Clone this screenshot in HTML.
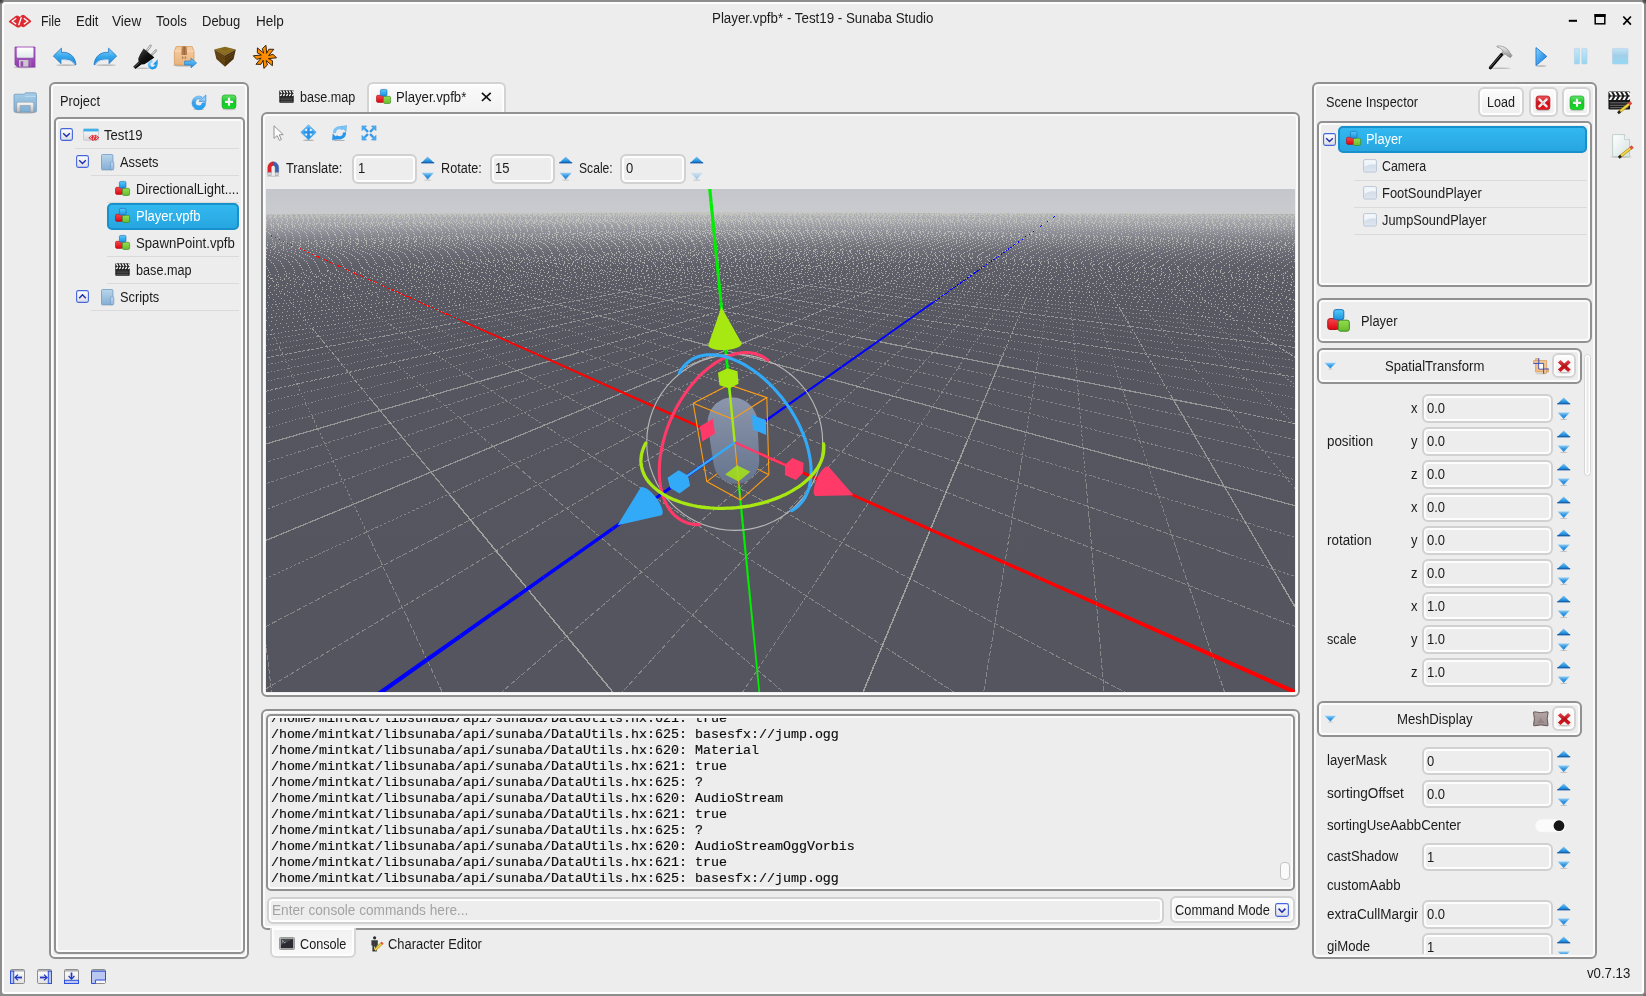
<!DOCTYPE html><html><head><meta charset="utf-8"><title>Sunaba Studio</title>
<style>
*{box-sizing:border-box}
html,body{margin:0;padding:0}
body{width:1646px;height:996px;overflow:hidden;position:relative;background:#8d8d8d;font-family:"Liberation Sans",sans-serif;font-size:13px;color:#1b1b1b;line-height:1}
#root{position:absolute;left:0;top:0;width:1646px;height:996px;will-change:transform;overflow:hidden}
.a{position:absolute}
.win{left:2px;top:2px;width:1642px;height:992px;background:#ededed;border-radius:4px 4px 3px 3px;box-shadow:inset 0 0 0 2px #fefefe}
.t{position:absolute;white-space:pre;line-height:16px;height:16px;font-size:14px;transform:scaleX(.929);transform-origin:0 0}
.frame{position:absolute;border:2px solid #919191;border-radius:6px;box-shadow:inset 0 0 0 2px #fbfbfb;background:#ededed}
.sep{position:absolute;height:1px;background:#dadada}
.sel{position:absolute;border-radius:5px;border:2px solid #1890cc;background:linear-gradient(#33b8f0,#27a6e0)}
.inp{position:absolute;border:2px solid #d1d1d1;border-radius:6px;box-shadow:inset 0 0 0 2px #fdfdfd;background:#ededed}
.btn{position:absolute;border:2px solid #d3d3d3;border-radius:6px;background:linear-gradient(#fcfcfc,#eeeeee);box-shadow:inset 0 0 0 2px #fdfdfd}
.mono{font-family:"Liberation Mono",monospace;font-size:13.33px;color:#0c0c0c;transform:none;-webkit-text-stroke:.16px #0c0c0c}
svg{position:absolute;overflow:visible}
</style>

</head><body><div id="root">
<div class="a" style="left:0;top:0;width:5px;height:5px;background:radial-gradient(circle at 0 0,#3c3c3c 0,#4a4a4a 2px,#8d8d8d 4.5px)"></div>
<div class="a" style="left:1641px;top:0;width:5px;height:5px;background:radial-gradient(circle at 100% 0,#3c3c3c 0,#4a4a4a 2px,#8d8d8d 4.5px)"></div>
<div class="a" style="left:1642px;top:992px;width:4px;height:4px;background:radial-gradient(circle at 100% 100%,#666 0,#777 2px,#8d8d8d 4px)"></div>
<div class="a win"></div>
<svg style="left:8px;top:14px" width="24" height="14" viewBox="0 0 24 14"><path d="M1.2 7 L7.6 1.9 Q9 1 10.4 1.9 L12 3 L13.6 1.3 Q15 .3 16.4 1.3 L22.8 6.4 Q23.6 7.2 22.8 8 L17 12.6 Q15.4 13.6 14 12.8 L13 12.2 L11.6 13.2 Q10 14 8.6 13 L1.2 8.2 Q.4 7.6 1.2 7Z" fill="#dc2a30"/><path d="M8.2 4.2 L4.2 7.2 L8.2 10.2" fill="none" stroke="#fff" stroke-width="1.3"/><path d="M15.8 4.2 L19.8 7.2 L15.8 10.2" fill="none" stroke="#fff" stroke-width="1.3"/><path d="M13.4 3.2 L10.6 11.2" stroke="#fff" stroke-width="1.3"/></svg>
<div class="t " style="left:40.5px;top:12.8px;transform:scaleX(0.8864);">File</div>
<div class="t " style="left:75.6px;top:12.8px;transform:scaleX(0.9285);">Edit</div>
<div class="t " style="left:112px;top:12.8px;transform:scaleX(0.9703);">View</div>
<div class="t " style="left:156.4px;top:12.8px;transform:scaleX(0.9423);">Tools</div>
<div class="t " style="left:202.3px;top:12.8px;transform:scaleX(0.9281);">Debug</div>
<div class="t " style="left:256.4px;top:12.8px;transform:scaleX(0.9689);">Help</div>
<div class="t " style="left:712.3px;top:10.2px;transform:scaleX(0.9529);">Player.vpfb* - Test19 - Sunaba Studio</div>
<svg style="left:0px;top:0px" width="1646" height="40" viewBox="0 0 1646 40"><rect x="1568.8" y="19.8" width="8.2" height="2" fill="#000"/><rect x="1595.2" y="14.8" width="9.6" height="9" fill="none" stroke="#000" stroke-width="1.5"/><rect x="1594.5" y="14" width="11" height="3" fill="#000"/><path d="M1623.3 16.5 L1630.9 24.6 M1630.9 16.5 L1623.3 24.6" stroke="#000" stroke-width="1.7" fill="none"/></svg>
<svg style="left:13px;top:45px" width="24" height="24" viewBox="0 0 24 24"><defs><linearGradient id="g1" x1="0" y1="0" x2="0" y2="1"><stop offset="0" stop-color="#b86ccc"/><stop offset="1" stop-color="#8a3fa6"/></linearGradient><linearGradient id="g2" x1="0" y1="0" x2="0" y2="1"><stop offset="0" stop-color="#ffffff"/><stop offset="1" stop-color="#dfeaea"/></linearGradient></defs><ellipse cx="12" cy="22.3" rx="11.5" ry="1" fill="#000" opacity=".18"/><path d="M2 2 H22 V22 H4.5 L2 19.5Z" fill="url(#g1)" stroke="#8d3aa8" stroke-width=".8"/><rect x="3.8" y="2.6" width="16.6" height="10.2" rx=".8" fill="url(#g2)"/><rect x="6" y="15" width="9.4" height="6.6" fill="#c9c9cc"/><rect x="7.6" y="16.4" width="2.6" height="5.2" fill="#9a48b4"/><rect x="16.8" y="14.6" width="1.4" height="6.6" fill="#a860be"/></svg>
<svg style="left:53px;top:47px" width="24" height="20" viewBox="0 0 24 20"><defs><linearGradient id="g3" x1="0" y1="0" x2="0" y2="1"><stop offset="0" stop-color="#8fd6fb"/><stop offset="0.5" stop-color="#38a8ec"/><stop offset="1" stop-color="#1d86d6"/></linearGradient></defs><ellipse cx="13" cy="18.2" rx="10" ry=".9" fill="#000" opacity=".2"/><g transform=""><path d="M.4 9 L8.4 1.2 V5.4 C16 4.6 22 9 23 17.6 H21.8 C19.6 13.6 15.4 12.4 8.4 12.6 V17 Z" fill="url(#g3)" stroke="#2a7cc8" stroke-width=".9" stroke-linejoin="round"/><path d="M8.4 12.6 V17 H9 V13.4 C15 13.2 19.4 14 21.6 17.4 H22 C19.6 13.6 15.4 12.4 8.4 12.6Z" fill="#fff" opacity=".85"/></g></svg>
<svg style="left:93px;top:47px" width="24" height="20" viewBox="0 0 24 20"><defs><linearGradient id="g4" x1="0" y1="0" x2="0" y2="1"><stop offset="0" stop-color="#8fd6fb"/><stop offset="0.5" stop-color="#38a8ec"/><stop offset="1" stop-color="#1d86d6"/></linearGradient></defs><ellipse cx="13" cy="18.2" rx="10" ry=".9" fill="#000" opacity=".2"/><g transform="translate(24,0) scale(-1,1)"><path d="M.4 9 L8.4 1.2 V5.4 C16 4.6 22 9 23 17.6 H21.8 C19.6 13.6 15.4 12.4 8.4 12.6 V17 Z" fill="url(#g4)" stroke="#2a7cc8" stroke-width=".9" stroke-linejoin="round"/><path d="M8.4 12.6 V17 H9 V13.4 C15 13.2 19.4 14 21.6 17.4 H22 C19.6 13.6 15.4 12.4 8.4 12.6Z" fill="#fff" opacity=".85"/></g></svg>
<svg style="left:133px;top:45px" width="25" height="25" viewBox="0 0 25 25"><defs><linearGradient id="g5" x1="0" y1="0" x2="1" y2="1"><stop offset="0" stop-color="#5a5a5a"/><stop offset="0.5" stop-color="#111"/><stop offset="1" stop-color="#000"/></linearGradient></defs><ellipse cx="10" cy="23.3" rx="7" ry=".8" fill="#000" opacity=".2"/><path d="M14 5.4 L17.6 .8 M19 9.6 L23 5.4" stroke="#9a9a9a" stroke-width="2.4" stroke-linecap="round"/><path d="M14.4 4.8 L17.4 1 M19.4 9 L22.8 5.6" stroke="#eee" stroke-width="1" stroke-linecap="round"/><path d="M10.6 3.4 L21.4 12.6 L15.8 16.4 L11.4 19.2 L8.4 19.4 L2.4 24 L.2 21.8 L5.6 16.6 L5.2 13.8 L7 9.6Z" fill="url(#g5)"/><path d="M1 22.6 L6.6 17.4" stroke="#777" stroke-width=".7"/><defs><linearGradient id="g6" x1="0" y1="0" x2="0" y2="1"><stop offset="0" stop-color="#8ed4fb"/><stop offset="1" stop-color="#1b98ee"/></linearGradient></defs><circle cx="19.6" cy="19.6" r="3.5" fill="none" stroke="url(#g6)" stroke-width="2.62" stroke-dasharray="17.15 4.90" transform="rotate(-20 19.6 19.6)"/><path d="M24.68 14.35 V19.40 H19.80Z" fill="#2a96ea"/></svg>
<svg style="left:173px;top:45px" width="24" height="24" viewBox="0 0 24 24"><defs><linearGradient id="g7" x1="0" y1="0" x2="0" y2="1"><stop offset="0" stop-color="#f6cfa4"/><stop offset="1" stop-color="#e9b27c"/></linearGradient><linearGradient id="g8" x1="0" y1="0" x2="0" y2="1"><stop offset="0" stop-color="#7ccbfa"/><stop offset="1" stop-color="#1d8fe6"/></linearGradient></defs><ellipse cx="11" cy="20.6" rx="11" ry=".9" fill="#000" opacity=".25"/><path d="M1.4 6 L3.2 1.6 H19.2 L21 6 V20 H1.4Z" fill="url(#g7)" stroke="#d79c62" stroke-width=".8"/><path d="M1.4 6 H21" stroke="#fbe3c8" stroke-width=".8"/><path d="M8.8 1.6 H13.6 L14 6 V10 H8.4 V6Z" fill="#b87f4e"/><path d="M10.6 1.6 H12 V10 H10.6Z" fill="#9d6a3e"/><path d="M9 12 l1.2 0 l-.8 2 M11.6 12 l1.2 0 l-.8 2" stroke="#8a5a30" stroke-width=".7" fill="none"/><path d="M11.6 16 H18 V13.2 L23.6 18 L18 22.8 V20 H11.6Z" fill="url(#g8)" stroke="#2a80d0" stroke-width=".7" stroke-linejoin="round"/></svg>
<svg style="left:213px;top:46px" width="24" height="22" viewBox="0 0 24 22"><path d="M1.2 3.6 L12 .8 L22.8 3.6 L12 9.4Z" fill="#86691c"/><path d="M1.2 3.6 L12 9.4 V20.8 L3.4 13Z" fill="#5e4013"/><path d="M22.8 3.6 L12 9.4 V20.8 L20.6 13Z" fill="#4a300d"/><path d="M3 6.6 L12 12 L21 6.6 M3.4 9.6 L12 15 L20.4 9.6" stroke="#6e5018" stroke-width=".9" fill="none" opacity=".8"/><path d="M5 2.9 L12 6.4 L19 2.9" stroke="#9a7c28" stroke-width=".8" fill="none"/></svg>
<svg style="left:253px;top:45px" width="25" height="25" viewBox="0 0 25 25"><path d="M10.69 8.09 L9.34 3.69 L12.92 0.19 L13.67 8.33 L15.82 4.26 L20.82 4.31 L15.61 10.59 L20.01 9.24 L23.51 12.82 L15.37 13.57 L19.44 15.72 L19.39 20.72 L13.11 15.51 L14.46 19.91 L10.88 23.41 L10.13 15.27 L7.98 19.34 L2.98 19.29 L8.19 13.01 L3.79 14.36 L0.29 10.78 L8.43 10.03 L4.36 7.88 L4.41 2.88Z" fill="#ff8c00" stroke="#3a2206" stroke-width="1" stroke-linejoin="round"/></svg>
<svg style="left:1488px;top:45px" width="25" height="25" viewBox="0 0 25 25"><defs><linearGradient id="g9" x1="0" y1="0" x2="0" y2="1"><stop offset="0" stop-color="#f4f4f4"/><stop offset="1" stop-color="#8a8a8a"/></linearGradient></defs><ellipse cx="12" cy="23.3" rx="11" ry=".7" fill="#000" opacity=".2"/><path d="M9 1 C14 .6 19.6 2.6 21.6 7.4 L24 10.6 L22.4 12.6 L19.4 10.8 L17 8.8 L14.4 11 L12.6 9.2 L15 6.6 C14 4 12 2.6 9 2Z" fill="url(#g9)" stroke="#777" stroke-width=".6"/><path d="M13.4 9.8 L2.4 22.8" stroke="#0a0a0a" stroke-width="3.2" stroke-linecap="round"/><path d="M12.6 10.2 L2.4 22" stroke="#777" stroke-width=".7" stroke-linecap="round"/></svg>
<svg style="left:1534.7px;top:47px" width="13" height="20" viewBox="0 0 13 20"><defs><linearGradient id="g10" x1="0" y1="0" x2="1" y2="1"><stop offset="0" stop-color="#8ad8fc"/><stop offset="0.55" stop-color="#3a9cec"/><stop offset="1" stop-color="#1a78d8"/></linearGradient></defs><ellipse cx="6" cy="19" rx="5.5" ry=".8" fill="#000" opacity=".25"/><path d="M1 .6 L11.8 9.4 L1 18.6Z" fill="url(#g10)" stroke="#2c82d8" stroke-width="1" stroke-linejoin="round"/></svg>
<svg style="left:1573.7px;top:48px" width="14" height="17" viewBox="0 0 14 17"><defs><linearGradient id="g11" x1="0" y1="0" x2="0" y2="1"><stop offset="0" stop-color="#c5e6f6"/><stop offset="1" stop-color="#93d6f2"/></linearGradient></defs><rect x=".4" y=".4" width="5.2" height="15.6" rx=".8" fill="url(#g11)" stroke="#b4cdea" stroke-width=".6"/><rect x="7.8" y=".4" width="5.2" height="15.6" rx=".8" fill="url(#g11)" stroke="#b4cdea" stroke-width=".6"/></svg>
<svg style="left:1612px;top:48px" width="17" height="17" viewBox="0 0 17 17"><defs><linearGradient id="g12" x1="0" y1="0" x2="0" y2="1"><stop offset="0" stop-color="#c0e4f6"/><stop offset="0.45" stop-color="#a4cfe8"/><stop offset="1" stop-color="#93d8f4"/></linearGradient></defs><rect x=".4" y=".4" width="15.6" height="15.6" rx="1" fill="url(#g12)" stroke="#b4cdea" stroke-width=".6"/></svg>
<svg style="left:12.8px;top:91.6px" width="25" height="22" viewBox="0 0 25 22"><defs><linearGradient id="g13" x1="0" y1="0" x2="0" y2="1"><stop offset="0" stop-color="#a6cde6"/><stop offset="1" stop-color="#7eaed6"/></linearGradient><linearGradient id="g14" x1="0" y1="0" x2="0" y2="1"><stop offset="0" stop-color="#fafafa"/><stop offset="1" stop-color="#b9b9bf"/></linearGradient></defs><ellipse cx="12" cy="20.6" rx="11" ry=".8" fill="#000" opacity=".25"/><path d="M1 3.2 Q1 2.2 2 2.2 H11 L12.6 .8 H22 Q23.4 .8 23.4 2.2 V19 Q23.4 20 22.4 20 H2 Q1 20 1 19Z" fill="url(#g13)" stroke="#6f9cc0" stroke-width=".8"/><path d="M12 4.4 H22.6" stroke="#c5e0f0" stroke-width=".8"/><path d="M3.6 20.2 V12 Q3.6 10.2 5.4 10.2 H19 Q20.8 10.2 20.8 12 V20.2 H17.2 V13.6 H7.2 V20.2Z" fill="url(#g14)" stroke="#8a8a90" stroke-width=".5"/></svg>
<svg style="left:1608px;top:91px" width="26" height="24" viewBox="0 0 26 24"><g transform="scale(1.5,1.46)"><rect x=".3" y=".3" width="14.4" height="12.4" rx=".8" fill="#1a1a1a"/><path d="M0.60 0.6 h1.5 l1.4 2.60 h-1.5Z" fill="#fff"/><path d="M3.60 0.6 h1.5 l1.4 2.60 h-1.5Z" fill="#fff"/><path d="M6.60 0.6 h1.5 l1.4 2.60 h-1.5Z" fill="#fff"/><path d="M9.60 0.6 h1.5 l1.4 2.60 h-1.5Z" fill="#fff"/><path d="M12.60 0.6 h1.5 l1.4 2.60 h-1.5Z" fill="#fff"/><path d="M2.00 3.6 h1.5 l-1.4 2.60 h-1.5Z" fill="#fff"/><path d="M5.00 3.6 h1.5 l-1.4 2.60 h-1.5Z" fill="#fff"/><path d="M8.00 3.6 h1.5 l-1.4 2.60 h-1.5Z" fill="#fff"/><path d="M11.00 3.6 h1.5 l-1.4 2.60 h-1.5Z" fill="#fff"/><path d="M14.00 3.6 h1.5 l-1.4 2.60 h-1.5Z" fill="#fff"/><path d="M1.4 8.1 H13.6 M1.4 9.8 H13.6 M1.4 11.4 H13.6" stroke="#7a7a7a" stroke-width=".6"/><path d="M.4 3.4 H14.6 M.4 6.6 H14.6" stroke="#1a1a1a" stroke-width=".5"/></g><path d="M23.2 11.4 L10.8 21.4" stroke="#b39212" stroke-width="3.1"/><path d="M23.2 11.4 L10.8 21.4" stroke="#f2d84a" stroke-width="1.8"/><path d="M23.2 11.4 L21.0 13.3" stroke="#e84850" stroke-width="3.1"/><path d="M12.200000000000001 20.2 L10.0 22.2" stroke="#222" stroke-width="2.6"/></svg>
<svg style="left:1610px;top:134px" width="25" height="25" viewBox="0 0 25 25"><defs><linearGradient id="g15" x1="0" y1="0" x2="1" y2="1"><stop offset="0" stop-color="#ffffff"/><stop offset="1" stop-color="#d4e2e0"/></linearGradient></defs><ellipse cx="11" cy="23" rx="11" ry=".7" fill="#000" opacity=".2"/><path d="M2.6 .6 H14.6 L19.6 5.6 V22.6 H2.6Z" fill="url(#g15)" stroke="#b4c4c2" stroke-width=".8"/><path d="M14.6 .6 V5.6 H19.6" fill="#eef4f4" stroke="#b4c4c2" stroke-width=".7"/><path d="M22.6 12.6 L9.6 23" stroke="#b39212" stroke-width="3.1"/><path d="M22.6 12.6 L9.6 23" stroke="#f2d84a" stroke-width="1.8"/><path d="M22.6 12.6 L20.400000000000002 14.5" stroke="#e84850" stroke-width="3.1"/><path d="M11.0 21.8 L8.799999999999999 23.8" stroke="#222" stroke-width="2.6"/></svg>
<div class="a frame" style="left:49px;top:82px;width:200px;height:877px;"></div>
<div class="t " style="left:59.8px;top:93.2px;transform:scaleX(0.9179);">Project</div>
<svg style="left:191px;top:94px" width="16" height="16" viewBox="0 0 16 16"><defs><linearGradient id="g16" x1="0" y1="0" x2="0" y2="1"><stop offset="0" stop-color="#8fd4fb"/><stop offset="0.45" stop-color="#3f9fe6"/><stop offset="1" stop-color="#18a6fa"/></linearGradient></defs><ellipse cx="7.6" cy="15.2" rx="5.6" ry=".7" fill="#000" opacity=".2"/><path d="M11.2 2.9 A6.9 6.9 0 1 0 14.7 8.4 L11.1 9 A3.3 3.3 0 1 1 9 5.3Z" fill="url(#g16)" stroke="#3a90dc" stroke-width=".5"/><path d="M14.9 .9 V7.5 H7.9Z" fill="#64b8f4" stroke="#2f88da" stroke-width=".6" stroke-linejoin="round"/><path d="M14.2 2.6 V6.8 H9.8Z" fill="#9bd4fa" opacity=".8"/></svg>
<svg style="left:221px;top:94px" width="16" height="16" viewBox="0 0 16 16"><defs><linearGradient id="g17" x1="0" y1="0" x2="0" y2="1"><stop offset="0" stop-color="#62e46a"/><stop offset="0.5" stop-color="#14c424"/><stop offset="1" stop-color="#12dc24"/></linearGradient></defs><ellipse cx="8" cy="15.4" rx="7" ry=".8" fill="#000" opacity=".15"/><rect x="1.1" y="1" width="13.8" height="13.6" rx="2.6" fill="url(#g17)" stroke="#1aa424" stroke-width=".7"/><path d="M8 3.8 V11.8 M3.9 7.8 H12.1" stroke="#fbeefb" stroke-width="2.2"/></svg>
<div class="a frame" style="left:54px;top:117px;width:191px;height:837px;border-radius:5px"></div>
<svg style="left:60px;top:128px" width="13" height="13" viewBox="0 0 13 13"><defs><linearGradient id="g18" x1="0" y1="0" x2="0" y2="1"><stop offset="0" stop-color="#ffffff"/><stop offset="1" stop-color="#dcdce4"/></linearGradient></defs><rect x=".6" y=".6" width="11.8" height="11.8" rx="1.8" fill="url(#g18)" stroke="#4466dc" stroke-width="1.1"/><path d="M3.2 5.2 L6.5 8.6 L9.8 5.2" fill="none" stroke="#1c2eaa" stroke-width="1.4"/></svg>
<svg style="left:83px;top:128px" width="17" height="14" viewBox="0 0 17 14"><defs><linearGradient id="g19" x1="0" y1="0" x2="0" y2="1"><stop offset="0" stop-color="#ffffff"/><stop offset="1" stop-color="#d8d8dc"/></linearGradient></defs><rect x=".5" y=".9" width="15" height="11.4" rx=".8" fill="url(#g19)" stroke="#b4bcc8" stroke-width=".6"/><rect x=".5" y=".8" width="15" height="2.7" fill="#3db2ea"/><g transform="translate(5.2,6.3) scale(.47)"><path d="M1.2 7 L7.6 1.9 Q9 1 10.4 1.9 L12 3 L13.6 1.3 Q15 .3 16.4 1.3 L22.8 6.4 Q23.6 7.2 22.8 8 L17 12.6 Q15.4 13.6 14 12.8 L13 12.2 L11.6 13.2 Q10 14 8.6 13 L1.2 8.2 Q.4 7.6 1.2 7Z" fill="#dc2a30"/><path d="M8.2 4 L4.2 7.2 L8.2 10.4 M15.8 4 L19.8 7.2 L15.8 10.4 M13.4 3 L10.6 11.4" fill="none" stroke="#fff" stroke-width="1.6"/></g></svg>
<div class="t " style="left:103.7px;top:126.8px;transform:scaleX(0.9358);">Test19</div>
<div class="a sep" style="left:75px;top:148px;width:164px;height:1px;"></div>
<svg style="left:76px;top:155px" width="13" height="13" viewBox="0 0 13 13"><defs><linearGradient id="g20" x1="0" y1="0" x2="0" y2="1"><stop offset="0" stop-color="#ffffff"/><stop offset="1" stop-color="#dcdce4"/></linearGradient></defs><rect x=".6" y=".6" width="11.8" height="11.8" rx="1.8" fill="url(#g20)" stroke="#4466dc" stroke-width="1.1"/><path d="M3.2 5.2 L6.5 8.6 L9.8 5.2" fill="none" stroke="#1c2eaa" stroke-width="1.4"/></svg>
<svg style="left:101px;top:154px" width="14" height="17" viewBox="0 0 14 17"><defs><linearGradient id="g21" x1="0" y1="0" x2="0" y2="1"><stop offset="0" stop-color="#b9d6ea"/><stop offset="1" stop-color="#86aed6"/></linearGradient><linearGradient id="g22" x1="0" y1="0" x2="0" y2="1"><stop offset="0" stop-color="#c0d8ee"/><stop offset="1" stop-color="#94b8de"/></linearGradient></defs><ellipse cx="6.5" cy="16" rx="7" ry=".6" fill="#000" opacity=".15"/><rect x=".5" y=".5" width="11.4" height="15.2" rx="1" fill="url(#g21)" stroke="#6f9cc4" stroke-width=".8"/><path d="M9.4 9 Q9.4 7.8 10.6 7.8 H11.8 Q12.8 7.8 12.8 9 V14.4 Q12.8 15.6 11.6 15.6 H9.4Z" fill="url(#g22)" stroke="#6f9cc4" stroke-width=".7"/></svg>
<div class="t " style="left:119.8px;top:153.8px;transform:scaleX(0.9163);">Assets</div>
<div class="a sep" style="left:91px;top:175px;width:148px;height:1px;"></div>
<svg style="left:115px;top:181px" width="15" height="15" viewBox="0 0 15 15"><defs><linearGradient id="g23" x1="0" y1="0" x2="0" y2="1"><stop offset="0" stop-color="#f4484c"/><stop offset="1" stop-color="#de0410"/></linearGradient></defs><rect x="0.5" y="6.3" width="7.1" height="7.1" rx="1.42" fill="url(#g23)" stroke="#a81218" stroke-width="0.64"/><defs><linearGradient id="g24" x1="0" y1="0" x2="0" y2="1"><stop offset="0" stop-color="#94de4c"/><stop offset="1" stop-color="#68bc2e"/></linearGradient></defs><rect x="7.4" y="7.3" width="7.2" height="7.2" rx="1.44" fill="url(#g24)" stroke="#3c8a22" stroke-width="0.65"/><defs><linearGradient id="g25" x1="0" y1="0" x2="0" y2="1"><stop offset="0" stop-color="#54cafe"/><stop offset="1" stop-color="#1e92da"/></linearGradient></defs><rect x="4.4" y="0.4" width="6.6" height="6.6" rx="1.32" fill="url(#g25)" stroke="#1868b4" stroke-width="0.59"/></svg>
<div class="t " style="left:135.6px;top:180.8px;transform:scaleX(0.9191);">DirectionalLight....</div>
<div class="a sep" style="left:107px;top:202px;width:132px;height:1px;"></div>
<div class="a sel" style="left:107px;top:203px;width:132px;height:27px;"></div>
<svg style="left:115px;top:208px" width="15" height="15" viewBox="0 0 15 15"><defs><linearGradient id="g26" x1="0" y1="0" x2="0" y2="1"><stop offset="0" stop-color="#f4484c"/><stop offset="1" stop-color="#de0410"/></linearGradient></defs><rect x="0.5" y="6.3" width="7.1" height="7.1" rx="1.42" fill="url(#g26)" stroke="#a81218" stroke-width="0.64"/><defs><linearGradient id="g27" x1="0" y1="0" x2="0" y2="1"><stop offset="0" stop-color="#94de4c"/><stop offset="1" stop-color="#68bc2e"/></linearGradient></defs><rect x="7.4" y="7.3" width="7.2" height="7.2" rx="1.44" fill="url(#g27)" stroke="#3c8a22" stroke-width="0.65"/><defs><linearGradient id="g28" x1="0" y1="0" x2="0" y2="1"><stop offset="0" stop-color="#54cafe"/><stop offset="1" stop-color="#1e92da"/></linearGradient></defs><rect x="4.4" y="0.4" width="6.6" height="6.6" rx="1.32" fill="url(#g28)" stroke="#1868b4" stroke-width="0.59"/></svg>
<div class="t " style="left:135.6px;top:207.8px;transform:scaleX(0.9298);color:#fff">Player.vpfb</div>
<svg style="left:115px;top:235px" width="15" height="15" viewBox="0 0 15 15"><defs><linearGradient id="g29" x1="0" y1="0" x2="0" y2="1"><stop offset="0" stop-color="#f4484c"/><stop offset="1" stop-color="#de0410"/></linearGradient></defs><rect x="0.5" y="6.3" width="7.1" height="7.1" rx="1.42" fill="url(#g29)" stroke="#a81218" stroke-width="0.64"/><defs><linearGradient id="g30" x1="0" y1="0" x2="0" y2="1"><stop offset="0" stop-color="#94de4c"/><stop offset="1" stop-color="#68bc2e"/></linearGradient></defs><rect x="7.4" y="7.3" width="7.2" height="7.2" rx="1.44" fill="url(#g30)" stroke="#3c8a22" stroke-width="0.65"/><defs><linearGradient id="g31" x1="0" y1="0" x2="0" y2="1"><stop offset="0" stop-color="#54cafe"/><stop offset="1" stop-color="#1e92da"/></linearGradient></defs><rect x="4.4" y="0.4" width="6.6" height="6.6" rx="1.32" fill="url(#g31)" stroke="#1868b4" stroke-width="0.59"/></svg>
<div class="t " style="left:135.6px;top:234.8px;transform:scaleX(0.9403);">SpawnPoint.vpfb</div>
<div class="a sep" style="left:107px;top:256px;width:132px;height:1px;"></div>
<svg style="left:115px;top:263px" width="15" height="13" viewBox="0 0 15 13"><rect x=".3" y=".3" width="14.4" height="12.4" rx=".8" fill="#1a1a1a"/><path d="M0.60 0.6 h1.5 l1.4 2.60 h-1.5Z" fill="#fff"/><path d="M3.60 0.6 h1.5 l1.4 2.60 h-1.5Z" fill="#fff"/><path d="M6.60 0.6 h1.5 l1.4 2.60 h-1.5Z" fill="#fff"/><path d="M9.60 0.6 h1.5 l1.4 2.60 h-1.5Z" fill="#fff"/><path d="M12.60 0.6 h1.5 l1.4 2.60 h-1.5Z" fill="#fff"/><path d="M2.00 3.6 h1.5 l-1.4 2.60 h-1.5Z" fill="#fff"/><path d="M5.00 3.6 h1.5 l-1.4 2.60 h-1.5Z" fill="#fff"/><path d="M8.00 3.6 h1.5 l-1.4 2.60 h-1.5Z" fill="#fff"/><path d="M11.00 3.6 h1.5 l-1.4 2.60 h-1.5Z" fill="#fff"/><path d="M14.00 3.6 h1.5 l-1.4 2.60 h-1.5Z" fill="#fff"/><path d="M1.4 8.1 H13.6 M1.4 9.8 H13.6 M1.4 11.4 H13.6" stroke="#7a7a7a" stroke-width=".6"/><path d="M.4 3.4 H14.6 M.4 6.6 H14.6" stroke="#1a1a1a" stroke-width=".5"/></svg>
<div class="t " style="left:135.6px;top:261.8px;transform:scaleX(0.9043);">base.map</div>
<div class="a sep" style="left:107px;top:283px;width:132px;height:1px;"></div>
<svg style="left:76px;top:290px" width="13" height="13" viewBox="0 0 13 13"><defs><linearGradient id="g32" x1="0" y1="0" x2="0" y2="1"><stop offset="0" stop-color="#ffffff"/><stop offset="1" stop-color="#dcdce4"/></linearGradient></defs><rect x=".6" y=".6" width="11.8" height="11.8" rx="1.8" fill="url(#g32)" stroke="#4466dc" stroke-width="1.1"/><path d="M3.2 8.2 L6.5 4.8 L9.8 8.2" fill="none" stroke="#1c2eaa" stroke-width="1.4"/></svg>
<svg style="left:101px;top:289px" width="14" height="17" viewBox="0 0 14 17"><defs><linearGradient id="g33" x1="0" y1="0" x2="0" y2="1"><stop offset="0" stop-color="#b9d6ea"/><stop offset="1" stop-color="#86aed6"/></linearGradient><linearGradient id="g34" x1="0" y1="0" x2="0" y2="1"><stop offset="0" stop-color="#c0d8ee"/><stop offset="1" stop-color="#94b8de"/></linearGradient></defs><ellipse cx="6.5" cy="16" rx="7" ry=".6" fill="#000" opacity=".15"/><rect x=".5" y=".5" width="11.4" height="15.2" rx="1" fill="url(#g33)" stroke="#6f9cc4" stroke-width=".8"/><path d="M9.4 9 Q9.4 7.8 10.6 7.8 H11.8 Q12.8 7.8 12.8 9 V14.4 Q12.8 15.6 11.6 15.6 H9.4Z" fill="url(#g34)" stroke="#6f9cc4" stroke-width=".7"/></svg>
<div class="t " style="left:119.5px;top:288.8px;transform:scaleX(0.9136);">Scripts</div>
<div class="a sep" style="left:91px;top:310px;width:148px;height:1px;"></div>
<div class="a " style="left:366.6px;top:82.4px;width:139px;height:34px;border:2px solid #d3d3d3;border-bottom:none;border-radius:6px 6px 0 0;background:linear-gradient(#fbfbfb,#f0f0f0);box-shadow:inset 0 0 0 2px #fdfdfd"></div>
<div class="a frame" style="left:261px;top:112px;width:1039px;height:585px;"></div>
<svg style="left:279px;top:90px" width="15" height="13" viewBox="0 0 15 13"><rect x=".3" y=".3" width="14.4" height="12.4" rx=".8" fill="#1a1a1a"/><path d="M0.60 0.6 h1.5 l1.4 2.60 h-1.5Z" fill="#fff"/><path d="M3.60 0.6 h1.5 l1.4 2.60 h-1.5Z" fill="#fff"/><path d="M6.60 0.6 h1.5 l1.4 2.60 h-1.5Z" fill="#fff"/><path d="M9.60 0.6 h1.5 l1.4 2.60 h-1.5Z" fill="#fff"/><path d="M12.60 0.6 h1.5 l1.4 2.60 h-1.5Z" fill="#fff"/><path d="M2.00 3.6 h1.5 l-1.4 2.60 h-1.5Z" fill="#fff"/><path d="M5.00 3.6 h1.5 l-1.4 2.60 h-1.5Z" fill="#fff"/><path d="M8.00 3.6 h1.5 l-1.4 2.60 h-1.5Z" fill="#fff"/><path d="M11.00 3.6 h1.5 l-1.4 2.60 h-1.5Z" fill="#fff"/><path d="M14.00 3.6 h1.5 l-1.4 2.60 h-1.5Z" fill="#fff"/><path d="M1.4 8.1 H13.6 M1.4 9.8 H13.6 M1.4 11.4 H13.6" stroke="#7a7a7a" stroke-width=".6"/><path d="M.4 3.4 H14.6 M.4 6.6 H14.6" stroke="#1a1a1a" stroke-width=".5"/></svg>
<div class="t " style="left:299.7px;top:88.5px;transform:scaleX(0.8994);">base.map</div>
<svg style="left:376px;top:89px" width="15" height="15" viewBox="0 0 15 15"><defs><linearGradient id="g35" x1="0" y1="0" x2="0" y2="1"><stop offset="0" stop-color="#f4484c"/><stop offset="1" stop-color="#de0410"/></linearGradient></defs><rect x="0.5" y="6.3" width="7.1" height="7.1" rx="1.42" fill="url(#g35)" stroke="#a81218" stroke-width="0.64"/><defs><linearGradient id="g36" x1="0" y1="0" x2="0" y2="1"><stop offset="0" stop-color="#94de4c"/><stop offset="1" stop-color="#68bc2e"/></linearGradient></defs><rect x="7.4" y="7.3" width="7.2" height="7.2" rx="1.44" fill="url(#g36)" stroke="#3c8a22" stroke-width="0.65"/><defs><linearGradient id="g37" x1="0" y1="0" x2="0" y2="1"><stop offset="0" stop-color="#54cafe"/><stop offset="1" stop-color="#1e92da"/></linearGradient></defs><rect x="4.4" y="0.4" width="6.6" height="6.6" rx="1.32" fill="url(#g37)" stroke="#1868b4" stroke-width="0.59"/></svg>
<div class="t " style="left:396.4px;top:88.5px;transform:scaleX(0.9409);">Player.vpfb*</div>
<svg style="left:481px;top:92px" width="11" height="10" viewBox="0 0 11 10"><path d="M.9 .8 L9.7 9 M9.7 .8 L.9 9" stroke="#111" stroke-width="1.7"/></svg>
<svg style="left:273px;top:125px" width="11" height="16" viewBox="0 0 11 16"><path d="M1 .8 V13.4 L4.1 10.6 L6.4 15.4 L8.4 14.4 L6.2 9.8 L10.2 9.6Z" fill="#fdfdfd" stroke="#8a8a8a" stroke-width=".9" stroke-linejoin="round"/></svg>
<svg style="left:300px;top:124px" width="17" height="17" viewBox="0 0 17 17"><defs><linearGradient id="g38" x1="0" y1="0" x2="0" y2="1"><stop offset="0" stop-color="#79c6f8"/><stop offset="1" stop-color="#1a92e8"/></linearGradient></defs><ellipse cx="8.5" cy="16.3" rx="5.6" ry=".7" fill="#000" opacity=".25"/><path d="M8.5 .8 L16.2 8.3 L8.5 15.8 L.8 8.3Z" fill="url(#g38)" stroke="#3a90dc" stroke-width=".5"/><g fill="#f4fafe"><circle cx="6.2" cy="6" r="1.05"/><circle cx="10.8" cy="6" r="1.05"/><circle cx="6.2" cy="10.6" r="1.05"/><circle cx="10.8" cy="10.6" r="1.05"/></g><path d="M8.5 3.4 V13.2 M3.6 8.3 H13.4" stroke="#2a8fe4" stroke-width="1.6"/></svg>
<svg style="left:331.6px;top:125px" width="15" height="16" viewBox="0 0 15 16"><ellipse cx="7.4" cy="15.4" rx="5.6" ry=".7" fill="#000" opacity=".25"/><path d="M2.5 8.2 A5 5 0 0 1 11.1 4.3" fill="none" stroke="#7cc4f6" stroke-width="3.1"/><path d="M8.9 1.5 L14.6 .5 L14.1 6.7Z" fill="#7cc4f6" stroke="#4a9ce0" stroke-width=".4" stroke-linejoin="round"/><g transform="rotate(180 7.5 7.8)"><path d="M2.5 8.2 A5 5 0 0 1 11.1 4.3" fill="none" stroke="#2496ee" stroke-width="3.1"/><path d="M8.9 1.5 L14.6 .5 L14.1 6.7Z" fill="#2496ee" stroke="#2a84da" stroke-width=".4" stroke-linejoin="round"/></g></svg>
<svg style="left:360.6px;top:124.6px" width="16" height="16" viewBox="0 0 16 16"><defs><linearGradient id="g39" x1="0" y1="0" x2="0" y2="1"><stop offset="0" stop-color="#5ab6f4"/><stop offset="1" stop-color="#1e92ea"/></linearGradient></defs><g transform="rotate(45 8 8)"><path d="M7 6.3 V1.4 H4.6 L8 -2.1 L11.4 1.4 H9 V6.3Z" fill="url(#g39)" stroke="#2f86d8" stroke-width=".35" stroke-linejoin="round"/></g><g transform="rotate(135 8 8)"><path d="M7 6.3 V1.4 H4.6 L8 -2.1 L11.4 1.4 H9 V6.3Z" fill="url(#g39)" stroke="#2f86d8" stroke-width=".35" stroke-linejoin="round"/></g><g transform="rotate(225 8 8)"><path d="M7 6.3 V1.4 H4.6 L8 -2.1 L11.4 1.4 H9 V6.3Z" fill="url(#g39)" stroke="#2f86d8" stroke-width=".35" stroke-linejoin="round"/></g><g transform="rotate(315 8 8)"><path d="M7 6.3 V1.4 H4.6 L8 -2.1 L11.4 1.4 H9 V6.3Z" fill="url(#g39)" stroke="#2f86d8" stroke-width=".35" stroke-linejoin="round"/></g></svg>
<svg style="left:267px;top:161px" width="13" height="16" viewBox="0 0 13 16"><path d="M.8 11.4 V6.2 A5.4 5.4 0 0 1 6.2 .8 V4.4 A2 2 0 0 0 4.2 6.4 V11.4Z" fill="#e0242c" stroke="#a81a20" stroke-width=".4"/><path d="M11.6 11.4 V6.2 A5.4 5.4 0 0 0 6.2 .8 V4.4 A2 2 0 0 1 8.2 6.4 V11.4Z" fill="#3a62b0" stroke="#26468a" stroke-width=".4"/><rect x=".8" y="11.4" width="3.4" height="3.2" fill="#d4d4d8" stroke="#8a8a90" stroke-width=".4"/><rect x="8.2" y="11.4" width="3.4" height="3.2" fill="#d4d4d8" stroke="#8a8a90" stroke-width=".4"/><ellipse cx="6.2" cy="15.2" rx="6.4" ry=".5" fill="#000" opacity=".2"/></svg>
<div class="t " style="left:286.3px;top:160.2px;transform:scaleX(0.9136);">Translate:</div>
<div class="a inp" style="left:351.7px;top:153.7px;width:65.3px;height:30.5px;"></div>
<div class="t " style="left:357.6px;top:160.2px;transform:scaleX(0.9290);">1</div>
<svg style="left:421px;top:156px" width="13.4" height="25" viewBox="0 0 13.4 25"><defs><linearGradient id="g40" x1="0" y1="0" x2="0" y2="1"><stop offset="0" stop-color="#86c8f2"/><stop offset="0.7" stop-color="#2290de"/><stop offset="1" stop-color="#1a66b6"/></linearGradient><linearGradient id="g41" x1="0" y1="0" x2="0" y2="1"><stop offset="0" stop-color="#8ccaf4"/><stop offset="0.5" stop-color="#3b9ee6"/><stop offset="1" stop-color="#1c86da"/></linearGradient><linearGradient id="g42" x1="0" y1="0" x2="0" y2="1"><stop offset="0" stop-color="#cfe3f2"/><stop offset="1" stop-color="#9cc4e2"/></linearGradient></defs><path d="M6.7 .6 L13.2 7 H.2Z" fill="url(#g40)"/><path d="M.2 6.8 H13.2" stroke="#1b5eac" stroke-width="1.2"/><path d="M.6 16.8 H12.8 L6.7 23.4Z" fill="url(#g41)"/><path d="M4.4 19 L6.7 21 L9 19" fill="none" stroke="#2a7ccc" stroke-width=".8" opacity=".6"/><ellipse cx="6.7" cy="23.9" rx="3.6" ry=".5" fill="#000" opacity=".2"/></svg>
<div class="t " style="left:440.6px;top:160.2px;transform:scaleX(0.9038);">Rotate:</div>
<div class="a inp" style="left:489.8px;top:153.7px;width:65.6px;height:30.5px;"></div>
<div class="t " style="left:494.9px;top:160.2px;transform:scaleX(0.9290);">15</div>
<svg style="left:559px;top:156px" width="13.4" height="25" viewBox="0 0 13.4 25"><defs><linearGradient id="g43" x1="0" y1="0" x2="0" y2="1"><stop offset="0" stop-color="#86c8f2"/><stop offset="0.7" stop-color="#2290de"/><stop offset="1" stop-color="#1a66b6"/></linearGradient><linearGradient id="g44" x1="0" y1="0" x2="0" y2="1"><stop offset="0" stop-color="#8ccaf4"/><stop offset="0.5" stop-color="#3b9ee6"/><stop offset="1" stop-color="#1c86da"/></linearGradient><linearGradient id="g45" x1="0" y1="0" x2="0" y2="1"><stop offset="0" stop-color="#cfe3f2"/><stop offset="1" stop-color="#9cc4e2"/></linearGradient></defs><path d="M6.7 .6 L13.2 7 H.2Z" fill="url(#g43)"/><path d="M.2 6.8 H13.2" stroke="#1b5eac" stroke-width="1.2"/><path d="M.6 16.8 H12.8 L6.7 23.4Z" fill="url(#g44)"/><path d="M4.4 19 L6.7 21 L9 19" fill="none" stroke="#2a7ccc" stroke-width=".8" opacity=".6"/><ellipse cx="6.7" cy="23.9" rx="3.6" ry=".5" fill="#000" opacity=".2"/></svg>
<div class="t " style="left:578.5px;top:160.2px;transform:scaleX(0.8658);">Scale:</div>
<div class="a inp" style="left:620.4px;top:153.7px;width:66.1px;height:30.5px;"></div>
<div class="t " style="left:625.5px;top:160.2px;transform:scaleX(0.9290);">0</div>
<svg style="left:690px;top:156px" width="13.4" height="25" viewBox="0 0 13.4 25"><defs><linearGradient id="g46" x1="0" y1="0" x2="0" y2="1"><stop offset="0" stop-color="#86c8f2"/><stop offset="0.7" stop-color="#2290de"/><stop offset="1" stop-color="#1a66b6"/></linearGradient><linearGradient id="g47" x1="0" y1="0" x2="0" y2="1"><stop offset="0" stop-color="#8ccaf4"/><stop offset="0.5" stop-color="#3b9ee6"/><stop offset="1" stop-color="#1c86da"/></linearGradient><linearGradient id="g48" x1="0" y1="0" x2="0" y2="1"><stop offset="0" stop-color="#cfe3f2"/><stop offset="1" stop-color="#9cc4e2"/></linearGradient></defs><path d="M6.7 .6 L13.2 7 H.2Z" fill="url(#g46)"/><path d="M.2 6.8 H13.2" stroke="#1b5eac" stroke-width="1.2"/><path d="M.6 16.8 H12.8 L6.7 23.4Z" fill="url(#g48)"/><ellipse cx="6.7" cy="23.9" rx="3.6" ry=".5" fill="#000" opacity=".2"/></svg>
<svg style="left:266px;top:189px;overflow:hidden" width="1029" height="503" viewBox="0 0 1029 503"><defs><linearGradient id="bgg" x1="0" y1="0" x2="0" y2="503" gradientUnits="userSpaceOnUse"><stop offset="0" stop-color="#c4c6cb"/><stop offset="0.0417" stop-color="#c9cace"/><stop offset="0.0447" stop-color="#b3b4b8"/><stop offset="0.0636" stop-color="#a7a8ad"/><stop offset="0.0835" stop-color="#92939a"/><stop offset="0.1033" stop-color="#7c7d85"/><stop offset="0.1232" stop-color="#6c6d76"/><stop offset="0.1530" stop-color="#5f5f69"/><stop offset="0.2027" stop-color="#5a5a64"/><stop offset="0.3220" stop-color="#565660"/><stop offset="1" stop-color="#55555f"/></linearGradient><linearGradient id="skyg" x1="0" y1="0" x2="0" y2="26.0" gradientUnits="userSpaceOnUse"><stop offset="0" stop-color="#c4c6cb"/><stop offset="1" stop-color="#cacbcf"/></linearGradient><linearGradient id="capg" x1="0" y1="0" x2="0" y2="1"><stop offset="0" stop-color="#8b96ab"/><stop offset="1" stop-color="#66748e"/></linearGradient></defs><style>.g path{fill:none;stroke:#cbcbc2;stroke-width:1}.g .Mn{stroke-width:1.5;stroke-opacity:.62}.g .Mm{stroke-width:1.25;stroke-opacity:.55}.g .Mf{stroke-opacity:.55;stroke-dasharray:3 1.5}.g .Mg{stroke-opacity:.6;stroke-dasharray:1.2 2.4}.g .MG{stroke-opacity:.7;stroke-dasharray:1 3.2}.g .mn{stroke-opacity:.42;stroke-dasharray:5 2}.g .mm{stroke-opacity:.4;stroke-dasharray:2.5 2}.g .mf{stroke-opacity:.46;stroke-dasharray:1.2 2.2}.g .mg{stroke-opacity:.66;stroke-dasharray:1 4.6}.g .mG{stroke-opacity:.7;stroke-dasharray:1 7.7}.g .mh{stroke-opacity:.72;stroke-dasharray:1 7.3}.g .mi{stroke-opacity:.72;stroke-dasharray:1 6.1}.g .mj{stroke-opacity:.7;stroke-dasharray:1 4.3}.g .mk{stroke-opacity:.7;stroke-dasharray:1 3.9}.g .edge{stroke-opacity:.8;stroke-dasharray:1 1.3}</style><rect width="1029" height="503" fill="url(#bgg)"/><path d="M0 0H1029V25.00L445.9 23.37L0 25.14Z" fill="url(#skyg)"/><g class="g" shape-rendering="crispEdges"><path class="mn" d="M388.9 234.6L-2.0 438.5M538.8 221.6L961.2 364.6M460.4 223.6L-2.0 501.1M471.0 222.7L1031.0 438.2M562.1 223.1L233.4 505.0M362.6 240.7L862.2 505.0M607.4 228.5L354.4 505.0M308.9 256.2L690.9 505.0M653.2 237.5L475.3 505.0M250.6 277.2L519.7 505.0M756.1 268.7L717.3 505.0M102.2 346.2L177.1 505.0M820.1 294.6L838.3 505.0M-2.0 438.3L5.8 505.0M901.3 333.0L959.2 505.0"/><path class="Mn" d="M514.5 221.1L112.4 505.0M415.2 229.6L1031.0 503.9M701.8 250.5L596.3 505.0M183.8 305.9L348.4 505.0M1015.7 395.1L1031.0 421.2"/><path class="Mm" d="M311.3 163.9L-2.0 255.5M590.5 148.2L960.1 220.9M497.5 145.6L-2.0 352.2M417.6 149.9L1031.0 317.3M615.0 150.2L514.5 221.1M280.3 169.5L415.2 229.6M736.3 167.2L701.8 250.5M105.2 210.8L183.8 305.9M904.4 205.6L1015.7 395.1"/><path class="mm" d="M378.0 154.0L-2.0 273.9M533.8 145.7L1031.0 250.8M425.2 149.2L-2.0 295.5M490.4 145.8L1031.0 269.4M463.7 146.7L-2.0 321.2M452.6 147.3L1031.0 291.2M528.6 145.6L-2.0 390.4M383.8 153.3L1031.0 349.0M558.0 146.4L388.9 234.6M350.2 157.7L538.8 221.6M961.2 364.6L1031.0 388.2M586.6 147.9L460.4 223.6M315.9 163.1L471.0 222.7M643.6 153.2L562.1 223.1M242.5 177.1L362.6 240.7M673.0 156.9L607.4 228.5M201.5 186.3L308.9 256.2M703.7 161.5L653.2 237.5M156.3 197.4L250.6 277.2M771.6 174.0L756.1 268.7M46.1 227.5L102.2 346.2M810.4 182.4L820.1 294.6M854.0 192.7L901.3 333.0M964.2 222.1L1031.0 301.9"/><path class="mf" d="M238.3 112.4L-2.0 151.3M636.7 98.5L937.0 132.0M299.8 105.8L-2.0 156.8M589.8 96.2L1031.0 147.4M342.2 102.1L-2.0 162.7M555.1 95.2L1031.0 152.7M404.0 97.9L-2.0 176.3M500.4 94.9L1031.0 165.0M429.0 96.6L-2.0 184.2M476.8 95.2L1031.0 172.0M451.6 95.8L-2.0 192.9M454.6 95.7L1031.0 179.8M492.2 94.9L-2.0 213.4M412.7 97.4L1031.0 198.0M511.0 94.8L-2.0 225.6M392.4 98.5L1031.0 208.8M529.0 94.9L-2.0 239.5M372.3 99.8L1031.0 221.0M563.8 95.4L378.0 154.0M331.8 102.9L533.8 145.7M580.7 95.9L425.2 149.2M311.1 104.8L490.4 145.8M597.6 96.5L463.7 146.7M289.9 106.8L452.6 147.3M631.3 98.2L528.6 145.6M245.5 111.6L383.8 153.3M648.4 99.3L558.0 146.4M221.9 114.3L350.2 157.7M665.7 100.4L586.6 147.9M197.2 117.4L315.9 163.1M701.7 103.3L643.6 153.2M143.1 124.6L242.5 177.1M720.5 105.0L673.0 156.9M113.3 128.8L201.5 186.3M740.1 106.9L703.7 161.5M81.0 133.6L156.3 197.4M781.9 111.4L771.6 174.0M7.3 145.1L46.1 227.5M804.5 114.0L810.4 182.4M828.5 117.0L854.0 192.7M882.1 124.1L964.2 222.1M912.3 128.3L1031.0 237.4M945.4 133.2L1031.0 197.1M1023.5 145.4L1031.0 149.4"/><path class="Mf" d="M375.7 99.6L-2.0 169.2M526.1 94.8L1031.0 158.6M472.5 95.2L-2.0 202.6M433.3 96.5L1031.0 188.4M546.6 95.1L311.3 163.9M352.1 101.3L590.5 148.2M960.1 220.9L1031.0 234.9M614.4 97.3L497.5 145.6M268.1 109.1L417.6 149.9M683.5 101.8L615.0 150.2M171.0 120.8L280.3 169.5M760.5 109.0L736.3 167.2M45.9 139.0L105.2 210.8M854.3 120.3L904.4 205.6M982.2 138.8L1031.0 169.5"/><path class="Mg" d="M203.6 92.3L-2.0 116.7M657.8 80.2L922.3 101.9M359.8 80.8L-2.0 129.5M536.5 76.6L1031.0 122.6M439.6 77.5L-2.0 146.3M462.8 77.0L1031.0 137.8M500.7 76.5L375.7 99.6M399.8 78.9L526.1 94.8M554.2 76.8L472.5 95.2M339.0 82.0L433.3 96.5M605.0 78.0L546.6 95.1M275.8 86.3L352.1 101.3M656.0 80.1L614.4 97.3M206.0 92.1L268.1 109.1M709.8 83.2L683.5 101.8M124.4 100.1L171.0 120.8M769.4 87.5L760.5 109.0M22.9 111.2L45.9 139.0M838.6 93.5L854.3 120.3M923.8 102.1L982.2 138.8"/><path class="mg" d="M262.0 87.3L-2.0 119.6M615.5 78.4L1012.5 111.9M302.0 84.4L-2.0 122.7M584.5 77.4L1031.0 116.3M333.5 82.3L-2.0 126.0M558.9 76.9L1031.0 119.4M382.8 79.6L-2.0 133.2M516.2 76.5L1031.0 126.0M403.4 78.7L-2.0 137.3M497.4 76.6L1031.0 129.7M422.2 78.1L-2.0 141.6M479.7 76.7L1031.0 133.6M456.0 77.1L238.3 112.4M446.5 77.3L636.7 98.5M937.0 132.0L1031.0 142.4M471.5 76.8L299.8 105.8M430.6 77.8L589.8 96.2M486.4 76.6L342.2 102.1M415.1 78.3L555.1 95.2M514.5 76.5L404.0 97.9M384.6 79.5L500.4 94.9M528.0 76.5L429.0 96.6M369.4 80.3L476.8 95.2M541.2 76.6L451.6 95.8M354.3 81.1L454.6 95.7M567.0 77.0L492.2 94.9M323.6 82.9L412.7 97.4M579.7 77.3L511.0 94.8M308.0 83.9L392.4 98.5M592.3 77.6L529.0 94.9M292.1 85.1L372.3 99.8M617.6 78.4L563.8 95.4M259.2 87.6L331.8 102.9M630.3 78.9L580.7 95.9M242.0 89.0L311.1 104.8M643.1 79.5L597.6 96.5M224.4 90.5L289.9 106.8M669.1 80.8L631.3 98.2M187.0 93.9L245.5 111.6M682.4 81.5L648.4 99.3M167.1 95.8L221.9 114.3M696.0 82.3L665.7 100.4M146.3 97.8L197.2 117.4M724.0 84.1L701.7 103.3M101.3 102.5L143.1 124.6M738.7 85.2L720.5 105.0M76.9 105.1L113.3 128.8M753.8 86.3L740.1 106.9M50.8 108.0L81.0 133.6M785.6 88.8L781.9 111.4M-2.0 125.5L7.3 145.1M802.4 90.3L804.5 114.0M820.1 91.8L828.5 117.0M858.0 95.4L882.1 124.1M878.6 97.4L912.3 128.3M900.5 99.6L945.4 133.2M948.8 104.8L1023.5 145.4M975.8 107.8L1031.0 134.2M1005.1 111.1L1031.0 122.2"/><path class="mG" d="M166.5 73.7L-2.0 87.5M679.7 63.7L905.1 76.6M220.7 70.2L-2.0 88.9M642.6 62.4L975.9 81.9M257.9 68.1L-2.0 90.3M615.5 61.7L1031.0 86.4M311.3 65.4L-2.0 93.4M573.9 60.8L1031.0 89.3M332.4 64.4L-2.0 95.0M556.7 60.6L1031.0 90.8M351.1 63.7L-2.0 96.7M540.8 60.5L1031.0 92.4M383.7 62.5L-2.0 100.4M512.2 60.4L1031.0 95.8M398.1 62.1L-2.0 102.4M499.1 60.4L1031.0 97.6M411.7 61.7L-2.0 104.5M486.4 60.5L1031.0 99.5M436.8 61.2L-2.0 109.0M462.3 60.7L1031.0 103.7M448.5 61.0L-2.0 111.4M450.8 60.9L1031.0 106.0M459.8 60.8L-2.0 114.0M439.4 61.1L1031.0 108.3M481.1 60.5L262.0 87.3M417.3 61.6L615.5 78.4M1012.5 111.9L1031.0 113.5M491.4 60.5L302.0 84.4M406.4 61.9L584.5 77.4M501.4 60.4L333.5 82.3M395.6 62.2L558.9 76.9M520.8 60.4L382.8 79.6M374.1 62.8L516.2 76.5M530.2 60.4L403.4 78.7M363.4 63.2L497.4 76.6M539.5 60.5L422.2 78.1M352.7 63.6L479.7 76.7M557.8 60.6L456.0 77.1M331.0 64.5L446.5 77.3M566.8 60.7L471.5 76.8M320.0 65.0L430.6 77.8M575.8 60.9L486.4 76.6M309.0 65.5L415.1 78.3M593.7 61.2L514.5 76.5M286.4 66.6L384.6 79.5M602.6 61.4L528.0 76.5M274.9 67.2L369.4 80.3M611.5 61.6L541.2 76.6M263.2 67.8L354.3 81.1M629.4 62.0L567.0 77.0M239.0 69.1L323.6 82.9M638.4 62.3L579.7 77.3M226.5 69.9L308.0 83.9M647.5 62.6L592.3 77.6M213.7 70.6L292.1 85.1M665.8 63.2L617.6 78.4M187.1 72.3L259.2 87.6M675.1 63.6L630.3 78.9M173.3 73.2L242.0 89.0M684.6 63.9L643.1 79.5M158.9 74.2L224.4 90.5M703.8 64.7L669.1 80.8M128.8 76.3L187.0 93.9M713.7 65.2L682.4 81.5M112.9 77.4L167.1 95.8M723.7 65.6L696.0 82.3M96.4 78.6L146.3 97.8M744.4 66.7L724.0 84.1M61.2 81.3L101.3 102.5M755.1 67.2L738.7 85.2M42.4 82.7L76.9 105.1M766.1 67.8L753.8 86.3M22.7 84.3L50.8 108.0M788.8 69.1L785.6 88.8M800.7 69.8L802.4 90.3M812.9 70.5L820.1 91.8M838.5 72.1L858.0 95.4M852.0 73.0L878.6 97.4M866.1 73.9L900.5 99.6M895.9 76.0L948.8 104.8M911.7 77.1L975.8 107.8M928.4 78.3L1005.1 111.1M964.2 81.0L1031.0 104.5M983.6 82.5L1031.0 97.8M1004.1 84.1L1031.0 92.1"/><path class="MG" d="M287.1 66.5L-2.0 91.8M593.2 61.2L1031.0 87.8M368.1 63.0L-2.0 98.5M526.1 60.4L1031.0 94.1M424.6 61.4L-2.0 106.7M474.2 60.6L1031.0 101.6M470.6 60.6L203.6 92.3M428.3 61.3L657.8 80.2M922.3 101.9L1031.0 110.8M511.2 60.4L359.8 80.8M384.9 62.5L536.5 76.6M548.7 60.5L439.6 77.5M341.9 64.0L462.8 77.0M584.8 61.0L500.7 76.5M297.8 66.0L399.8 78.9M620.4 61.8L554.2 76.8M251.2 68.4L339.0 82.0M656.6 62.9L605.0 78.0M200.6 71.5L275.8 86.3M694.1 64.3L656.0 80.1M144.1 75.2L206.0 92.1M734.0 66.1L709.8 83.2M79.2 79.9L124.4 100.1M777.3 68.4L769.4 87.5M2.0 85.9L22.9 111.2M825.5 71.3L838.6 93.5M880.6 74.9L923.8 102.1M945.8 79.6L1031.0 112.5M1025.9 85.8L1031.0 87.2"/><path class="mh" d="M151.0 47.8L-2.0 54.0M686.0 42.7L920.1 49.3M207.0 46.1L-2.0 54.6M648.5 42.0L993.4 51.9M245.3 45.0L-2.0 55.3M621.0 41.6L1031.0 53.6M275.3 44.2L-2.0 56.0M598.6 41.4L1031.0 54.3M300.3 43.6L-2.0 56.8M579.1 41.2L1031.0 55.0M321.8 43.1L-2.0 57.5M561.7 41.1L1031.0 55.8M341.0 42.7L-2.0 58.4M545.7 41.0L1031.0 56.5M358.3 42.4L-2.0 59.2M530.9 41.0L1031.0 57.3M374.2 42.1L-2.0 60.1M516.9 41.0L1031.0 58.2M389.0 41.9L-2.0 61.0M503.7 41.0L1031.0 59.0M402.8 41.7L-2.0 62.0M491.0 41.0L1031.0 60.0M415.8 41.6L-2.0 63.0M478.7 41.0L1031.0 60.9M428.2 41.4L-2.0 64.1M466.8 41.1L1031.0 61.9M440.1 41.3L-2.0 65.3M455.2 41.2L1031.0 63.0M451.4 41.2L-2.0 66.5M443.9 41.3L1031.0 64.2M462.4 41.1L-2.0 67.8M432.8 41.4L1031.0 65.4M473.0 41.1L-2.0 69.1M421.8 41.5L1031.0 66.6M483.3 41.0L-2.0 70.5M410.9 41.6L1031.0 68.0M493.4 41.0L-2.0 72.1M400.2 41.7L1031.0 69.4M503.2 41.0L-2.0 73.7M389.5 41.9L1031.0 70.9M512.8 41.0L-2.0 75.4M378.8 42.1L1031.0 72.5M522.3 41.0L-2.0 77.3M368.1 42.2L1031.0 74.3M531.6 41.0L-2.0 79.3M357.5 42.4L1031.0 76.1M540.8 41.0L-2.0 81.4M346.8 42.6L1031.0 78.1M549.9 41.0L-2.0 83.7M336.0 42.8L1031.0 80.3M558.9 41.1L-2.0 86.2M325.2 43.0L1031.0 82.6M567.8 41.1L220.7 70.2M314.3 43.3L642.6 62.4M975.9 81.9L1031.0 85.1M576.7 41.2L287.1 66.5M303.2 43.5L593.2 61.2M585.6 41.3L332.4 64.4M292.0 43.8L556.7 60.6M594.4 41.4L368.1 63.0M280.7 44.1L526.1 60.4M603.2 41.4L398.1 62.1M269.2 44.4L499.1 60.4M612.1 41.5L424.6 61.4M257.4 44.7L474.2 60.6M620.9 41.6L448.5 61.0M245.5 45.0L450.8 60.9M629.8 41.8L470.6 60.6M233.3 45.3L428.3 61.3M638.7 41.9L491.4 60.5M220.8 45.7L406.4 61.9M647.7 42.0L511.2 60.4M208.1 46.1L384.9 62.5M656.7 42.2L530.2 60.4M195.0 46.4L363.4 63.2M665.8 42.3L548.7 60.5M181.5 46.9L341.9 64.0M675.0 42.5L566.8 60.7M167.6 47.3L320.0 65.0M684.4 42.7L584.8 61.0M153.3 47.8L297.8 66.0M693.8 42.8L602.6 61.4M138.6 48.3L274.9 67.2M703.4 43.0L620.4 61.8M123.3 48.8L251.2 68.4M713.1 43.2L638.4 62.3M107.5 49.3L226.5 69.9M723.0 43.5L656.6 62.9M91.0 49.9L200.6 71.5M733.1 43.7L675.1 63.6M73.9 50.5L173.3 73.2M743.4 43.9L694.1 64.3M56.1 51.2L144.1 75.2M753.9 44.2L713.7 65.2M37.4 51.9L112.9 77.4M764.7 44.5L734.0 66.1M17.9 52.6L79.2 79.9M775.7 44.8L755.1 67.2M-2.0 53.8L42.4 82.7M787.0 45.1L777.3 68.4M-2.0 81.1L2.0 85.9M798.6 45.4L800.7 69.8M810.5 45.7L825.5 71.3M822.8 46.1L852.0 73.0M835.5 46.5L880.6 74.9M848.6 46.9L911.7 77.1M862.2 47.3L945.8 79.6M876.3 47.8L983.6 82.5M891.0 48.3L1025.9 85.8M906.3 48.8L1031.0 79.3M922.3 49.3L1031.0 73.0M939.0 49.9L1031.0 68.0M956.5 50.6L1031.0 63.9M974.9 51.2L1031.0 60.4M994.4 52.0L1031.0 57.5M1014.9 52.7L1031.0 55.0"/><path class="mi" d="M157.5 32.4L-2.0 35.0M679.5 30.3L947.2 33.4M233.3 31.4L-2.0 35.4M627.7 30.0L1031.0 34.8M281.7 30.9L-2.0 35.9M591.5 29.8L1031.0 35.2M318.5 30.6L-2.0 36.4M562.3 29.8L1031.0 35.7M348.8 30.3L-2.0 36.9M536.9 29.7L1031.0 36.2M375.0 30.2L-2.0 37.5M514.1 29.7L1031.0 36.8M398.3 30.0L-2.0 38.1M493.0 29.7L1031.0 37.4M419.4 29.9L-2.0 38.8M473.1 29.7L1031.0 38.0M439.0 29.8L-2.0 39.5M454.1 29.8L1031.0 38.7M457.3 29.8L-2.0 40.3M435.7 29.8L1031.0 39.5M474.6 29.7L-2.0 41.2M417.8 29.9L1031.0 40.3M491.1 29.7L-2.0 42.2M400.2 30.0L1031.0 41.2M507.1 29.7L-2.0 43.3M382.8 30.1L1031.0 42.3M522.5 29.7L-2.0 44.5M365.4 30.2L1031.0 43.4M537.6 29.7L-2.0 45.8M348.0 30.4L1031.0 44.7M552.4 29.7L-2.0 47.4M330.4 30.5L1031.0 46.1M567.0 29.8L-2.0 49.1M312.6 30.6L1031.0 47.8M581.5 29.8L-2.0 51.1M294.5 30.8L1031.0 49.6M595.9 29.9L-2.0 53.3M276.0 31.0L1031.0 51.8M610.2 29.9L275.3 44.2M257.0 31.2L598.6 41.4M624.6 30.0L358.3 42.4M237.4 31.4L530.9 41.0M639.1 30.1L415.8 41.6M217.1 31.6L478.7 41.0M653.8 30.2L462.4 41.1M196.0 31.9L432.8 41.4M668.6 30.3L503.2 41.0M174.0 32.2L389.5 41.9M683.7 30.4L540.8 41.0M150.9 32.5L346.8 42.6M699.2 30.5L576.7 41.2M126.6 32.8L303.2 43.5M715.0 30.6L612.1 41.5M100.8 33.1L257.4 44.7M731.2 30.8L647.7 42.0M73.4 33.5L208.1 46.1M747.9 30.9L684.4 42.7M44.0 34.0L153.3 47.8M765.3 31.1L723.0 43.5M12.5 34.4L91.0 49.9M783.3 31.3L764.7 44.5M-2.0 43.7L17.9 52.6M802.1 31.5L810.5 45.7M821.8 31.7L862.2 47.3M842.6 32.0L922.3 49.3M864.5 32.3L994.4 52.0M887.7 32.6L1031.0 49.2M912.5 32.9L1031.0 44.1M939.2 33.3L1031.0 40.6M967.9 33.7L1031.0 38.0M999.1 34.2L1031.0 36.1"/><path class="mj" d="M184.3 25.6L-2.0 26.7M660.8 24.9L991.9 26.3M269.0 25.2L-2.0 26.9M600.2 24.8L1031.0 26.7M322.9 25.1L-2.0 27.2M557.7 24.8L1031.0 26.9M364.1 24.9L-2.0 27.5M522.8 24.8L1031.0 27.2M398.3 24.9L-2.0 27.8M492.0 24.8L1031.0 27.5M428.1 24.8L-2.0 28.1M463.7 24.8L1031.0 27.9M455.0 24.8L-2.0 28.5M437.1 24.8L1031.0 28.3M479.8 24.8L-2.0 29.0M411.3 24.8L1031.0 28.7M503.1 24.8L-2.0 29.5M386.1 24.9L1031.0 29.2M525.4 24.8L-2.0 30.2M361.1 25.0L1031.0 29.8M546.9 24.8L-2.0 30.9M335.9 25.0L1031.0 30.5M568.0 24.8L-2.0 31.8M310.3 25.1L1031.0 31.3M588.8 24.8L-2.0 32.8M284.0 25.2L1031.0 32.3M609.4 24.8L-2.0 34.2M256.8 25.3L1031.0 33.6M630.2 24.9L281.7 30.9M228.4 25.4L591.5 29.8M651.2 24.9L398.3 30.0M198.5 25.5L493.0 29.7M672.6 25.0L474.6 29.7M166.6 25.7L417.8 29.9M694.5 25.0L537.6 29.7M132.4 25.8L348.0 30.4M717.2 25.1L595.9 29.9M95.4 26.0L276.0 31.0M740.8 25.2L653.8 30.2M54.9 26.2L196.0 31.9M765.6 25.3L715.0 30.6M10.1 26.5L100.8 33.1M791.7 25.4L783.3 31.3M819.6 25.5L864.5 32.3M849.6 25.6L967.9 33.7M882.0 25.8L1031.0 32.3M917.6 25.9L1031.0 29.6M957.0 26.1L1031.0 28.0M1001.2 26.4L1031.0 27.0"/><path class="mk" d="M445.9 23.4L-2.0 25.1M445.9 23.4L1031.0 25.0M467.2 23.4L-2.0 25.5M424.2 23.5L1031.0 25.3M490.5 23.5L-2.0 25.9M399.7 23.6L1031.0 25.8M515.9 23.6L-2.0 26.5M371.7 23.7L1031.0 26.3M543.8 23.6L334.1 25.0M339.4 23.8L548.4 24.8M574.6 23.7L438.5 24.8M301.8 23.9L453.6 24.8M608.7 23.8L514.4 24.8M257.5 24.1L373.6 24.9M646.9 23.9L581.0 24.8M204.5 24.3L294.0 25.2M689.6 24.1L645.9 24.9M139.9 24.6L206.1 25.5M738.0 24.2L714.3 25.1M59.5 24.9L100.2 26.0M793.2 24.3L791.7 25.4M856.6 24.5L886.3 25.8M930.4 24.7L1013.1 26.4M1017.2 25.0L1031.0 25.2"/><path class="edge" d="M445.9 23.4L-2.0 25.1M445.9 23.4L1031.0 25.0"/></g><path d="M-32.5 30.1L-47.1 23.7" stroke="#ff0000" stroke-width="1.1" stroke-dasharray="1 9" fill="none" shape-rendering="crispEdges"/><path d="M-4.7 42.5L-32.5 30.1" stroke="#ff0000" stroke-width="1.1" stroke-dasharray="1 6" fill="none" shape-rendering="crispEdges"/><path d="M50.9 67.3L-4.7 42.5" stroke="#ff0000" stroke-width="1.1" stroke-dasharray="1 3.5" fill="none" shape-rendering="crispEdges"/><path d="M119.4 97.8L50.9 67.3" stroke="#ff0000" stroke-width="1.1" stroke-dasharray="1.5 1.5" fill="none" shape-rendering="crispEdges"/><path d="M197.2 132.5L119.4 97.8" stroke="#ff0000" stroke-width="1.1" stroke-dasharray="3 1" fill="none" shape-rendering="crispEdges"/><path d="M196.9 133.3 L270.3 166.1 L271.1 164.3 L197.6 131.7Z" fill="#ff0000"/><path d="M270.3 166.1 L335.9 195.4 L336.7 193.5 L271.1 164.3Z" fill="#ff0000"/><path d="M335.9 195.4 L392.4 220.7 L393.3 218.6 L336.7 193.5Z" fill="#ff0000"/><path d="M392.4 220.7 L435.0 239.7 L436.0 237.5 L393.3 218.6Z" fill="#ff0000"/><path d="M435.0 239.7 L468.2 254.6 L469.2 252.3 L436.0 237.5Z" fill="#ff0000"/><path d="M468.2 254.6 L506.3 271.6 L507.4 269.2 L469.2 252.3Z" fill="#ff0000"/><path d="M506.3 271.6 L550.5 291.4 L551.6 288.8 L507.4 269.2Z" fill="#ff0000"/><path d="M550.5 291.4 L591.2 309.6 L592.4 306.9 L551.6 288.8Z" fill="#ff0000"/><path d="M591.2 309.6 L625.6 324.9 L626.8 322.2 L592.4 306.9Z" fill="#ff0000"/><path d="M625.6 324.9 L650.6 336.1 L651.9 333.3 L626.8 322.2Z" fill="#ff0000"/><path d="M650.6 336.1 L670.6 345.1 L671.9 342.2 L651.9 333.3Z" fill="#ff0000"/><path d="M670.6 345.1 L691.8 354.5 L693.1 351.6 L671.9 342.2Z" fill="#ff0000"/><path d="M691.8 354.5 L714.3 364.6 L715.6 361.6 L693.1 351.6Z" fill="#ff0000"/><path d="M714.3 364.6 L738.1 375.3 L739.5 372.2 L715.6 361.6Z" fill="#ff0000"/><path d="M738.1 375.3 L772.4 390.6 L773.8 387.4 L739.5 372.2Z" fill="#ff0000"/><path d="M772.4 390.6 L829.7 416.2 L831.2 412.9 L773.8 387.4Z" fill="#ff0000"/><path d="M829.7 416.2 L945.3 467.9 L946.9 464.3 L831.2 412.9Z" fill="#ff0000"/><path d="M945.3 467.9 L1095.9 535.2 L1097.6 531.2 L946.9 464.3Z" fill="#ff0000"/><path d="M788.3 27.8L794.8 23.2" stroke="#0000ff" stroke-width="1.1" stroke-dasharray="1 9" fill="none" shape-rendering="crispEdges"/><path d="M775.4 36.9L788.3 27.8" stroke="#0000ff" stroke-width="1.1" stroke-dasharray="1 6" fill="none" shape-rendering="crispEdges"/><path d="M748.4 56.0L775.4 36.9" stroke="#0000ff" stroke-width="1.1" stroke-dasharray="1 3.5" fill="none" shape-rendering="crispEdges"/><path d="M712.6 81.2L748.4 56.0" stroke="#0000ff" stroke-width="1.1" stroke-dasharray="1.5 1.5" fill="none" shape-rendering="crispEdges"/><path d="M668.0 112.8L712.6 81.2" stroke="#0000ff" stroke-width="1.1" stroke-dasharray="3 1" fill="none" shape-rendering="crispEdges"/><path d="M667.5 112.1 L620.8 144.9 L621.9 146.4 L668.4 113.4Z" fill="#0000ff"/><path d="M620.8 144.9 L575.1 177.1 L576.3 178.8 L621.9 146.4Z" fill="#0000ff"/><path d="M575.1 177.1 L532.0 207.4 L533.3 209.3 L576.3 178.8Z" fill="#0000ff"/><path d="M532.0 207.4 L497.0 232.0 L498.4 234.0 L533.3 209.3Z" fill="#0000ff"/><path d="M497.0 232.0 L468.0 252.4 L469.5 254.5 L498.4 234.0Z" fill="#0000ff"/><path d="M468.0 252.4 L432.8 277.1 L434.4 279.4 L469.5 254.5Z" fill="#0000ff"/><path d="M432.8 277.1 L389.1 307.8 L390.8 310.2 L434.4 279.4Z" fill="#0000ff"/><path d="M389.1 307.8 L345.8 338.2 L347.7 340.9 L390.8 310.2Z" fill="#0000ff"/><path d="M345.8 338.2 L306.8 365.7 L308.8 368.4 L347.7 340.9Z" fill="#0000ff"/><path d="M306.8 365.7 L276.8 386.8 L278.8 389.7 L308.8 368.4Z" fill="#0000ff"/><path d="M276.8 386.8 L251.8 404.4 L253.9 407.4 L278.8 389.7Z" fill="#0000ff"/><path d="M251.8 404.4 L224.2 423.8 L226.4 426.8 L253.9 407.4Z" fill="#0000ff"/><path d="M224.2 423.8 L193.7 445.2 L196.0 448.4 L226.4 426.8Z" fill="#0000ff"/><path d="M193.7 445.2 L159.8 469.1 L162.1 472.4 L196.0 448.4Z" fill="#0000ff"/><path d="M159.8 469.1 L108.1 505.4 L110.6 509.0 L162.1 472.4Z" fill="#0000ff"/><path d="M108.1 505.4 L12.6 572.6 L15.4 576.5 L110.6 509.0Z" fill="#0000ff"/><path d="M502.1 585.0 L495.7 518.5 L494.0 518.7 L500.7 585.1Z" fill="#00ee00"/><path d="M495.7 518.5 L489.2 452.1 L487.4 452.3 L494.0 518.7Z" fill="#00ee00"/><path d="M489.2 452.1 L483.2 389.7 L481.1 389.9 L487.4 452.3Z" fill="#00ee00"/><path d="M483.2 389.7 L477.7 333.2 L475.5 333.4 L481.1 389.9Z" fill="#00ee00"/><path d="M477.7 333.2 L473.4 288.9 L471.1 289.2 L475.5 333.4Z" fill="#00ee00"/><path d="M473.4 288.9 L469.9 253.3 L467.5 253.5 L471.1 289.2Z" fill="#00ee00"/><path d="M469.9 253.3 L465.9 211.2 L463.3 211.5 L467.5 253.5Z" fill="#00ee00"/><path d="M465.9 211.2 L461.0 160.8 L458.3 161.0 L463.3 211.5Z" fill="#00ee00"/><path d="M461.0 160.8 L456.3 112.5 L453.5 112.8 L458.3 161.0Z" fill="#00ee00"/><path d="M456.3 112.5 L452.2 70.5 L449.2 70.8 L453.5 112.8Z" fill="#00ee00"/><path d="M452.2 70.5 L449.2 39.1 L446.1 39.4 L449.2 70.8Z" fill="#00ee00"/><path d="M449.2 39.1 L446.7 13.4 L443.5 13.8 L446.1 39.4Z" fill="#00ee00"/><path d="M446.7 13.4 L444.0 -14.2 L440.8 -13.9 L443.5 13.8Z" fill="#00ee00"/><path d="M444.0 -14.2 L441.1 -44.1 L437.8 -43.8 L440.8 -13.9Z" fill="#00ee00"/><path d="M441.1 -44.1 L437.9 -76.6 L434.5 -76.2 L437.8 -43.8Z" fill="#00ee00"/><circle cx="468.7" cy="253.4" r="88" fill="none" stroke="#b9b9b9" stroke-width="1.1"/><path d="M470.4 270.1L502.9 285.6M440.8 292.6L470.4 270.1M470.4 270.1L463.0 195.7" fill="none" stroke="#ff9d10" stroke-width="1.1"/><path d="M441.6 235.5 L441.7 229.9 L442.6 226.7 L444.3 221.6 L447.6 217.2 L449.4 215.0 L452.1 213.0 L455.5 210.9 L458.1 209.8 L461.1 208.9 L464.3 208.5 L467.6 208.4 L470.6 208.8 L473.4 209.5 L477.0 211.0 L480.1 212.5 L482.2 214.3 L486.2 218.1 L488.8 222.7 L490.2 225.7 L491.3 231.1 L493.2 269.6 L493.1 273.2 L492.5 277.8 L490.9 281.4 L489.1 285.1 L486.4 288.1 L483.8 290.2 L480.7 292.3 L477.0 293.8 L472.8 294.7 L468.5 294.8 L464.5 294.2 L461.0 292.8 L458.1 291.3 L454.7 288.9 L452.1 285.7 L449.8 282.4 L448.3 278.1 L447.5 274.4Z" fill="url(#capg)" /><path d="M502.9 285.6L474.4 311.1M474.4 311.1L440.8 292.6M463.0 195.7L500.8 208.5M500.8 208.5L466.4 230.1M466.4 230.1L427.2 214.3M427.2 214.3L463.0 195.7M440.8 292.6L427.2 214.3M502.9 285.6L500.8 208.5M474.4 311.1L466.4 230.1" fill="none" stroke="#ff9d10" stroke-width="1.1"/><path d="M501.9 171.3 L500.2 170.0 L498.4 168.8 L496.6 167.7 L494.7 166.7 L492.7 165.9 L490.6 165.2 L488.4 164.6 L486.2 164.1 L483.9 163.8 L481.5 163.6 L479.0 163.6 L476.5 163.7 L474.0 164.0 L471.3 164.5 L468.6 165.1 L465.9 165.9 L463.1 166.9 L460.3 168.0 L460.3 168.0 L457.5 169.3 L454.6 170.8 L451.7 172.5 L448.8 174.4 L445.9 176.4 L443.0 178.6 L440.1 181.0 L437.2 183.5 L434.3 186.2 L431.5 189.1 L428.8 192.2 L426.0 195.4 L423.4 198.7 L420.8 202.2 L418.2 205.8 L415.8 209.5 L413.5 213.3 L411.2 217.3 L409.1 221.3 L407.1 225.4 L405.2 229.5 L403.4 233.7 L401.7 238.0 L400.2 242.3 L398.9 246.6 L397.7 250.9 L396.6 255.1 L395.7 259.4 L394.9 263.6 L394.3 267.8 L393.8 271.9 L393.5 276.0 L393.3 279.9 L393.3 283.8 L393.5 287.6 L393.7 291.2 L394.2 294.8 L394.7 298.2 L395.4 301.5 L396.2 304.6 L397.2 307.6 L398.2 310.5 L399.4 313.2 L400.7 315.8 L402.1 318.2 L403.5 320.4 L405.1 322.5 L406.8 324.4 L408.5 326.2 L410.3 327.8 L412.2 329.2 L414.1 330.5 L416.1 331.7 L418.1 332.7 L420.2 333.5 L422.3 334.2 L424.5 334.8 L426.6 335.2 L428.9 335.4 L431.1 335.6 L433.3 335.6" fill="none" stroke="#ff3a68" stroke-width="3.1" stroke-linecap="round"/><path d="M525.6 321.6 L527.4 320.6 L529.2 319.5 L530.8 318.2 L532.5 316.8 L534.0 315.3 L535.5 313.6 L536.9 311.8 L538.1 309.9 L539.3 307.9 L540.4 305.7 L541.4 303.5 L542.3 301.1 L543.1 298.6 L543.7 295.9 L544.3 293.2 L544.7 290.3 L544.9 287.4 L544.9 287.4 L545.1 284.3 L545.1 281.2 L545.0 277.9 L544.7 274.6 L544.3 271.1 L543.7 267.7 L543.0 264.1 L542.2 260.5 L541.2 256.8 L540.1 253.1 L538.8 249.4 L537.4 245.6 L535.8 241.8 L534.1 238.0 L532.3 234.3 L530.3 230.5 L528.2 226.8 L526.0 223.1 L523.7 219.4 L521.2 215.8 L518.7 212.3 L516.0 208.8 L513.2 205.4 L510.4 202.2 L507.5 199.0 L504.5 195.9 L501.5 193.0 L498.4 190.2 L495.3 187.5 L492.1 184.9 L488.9 182.5 L485.7 180.3 L482.5 178.2 L479.2 176.2 L476.0 174.4 L472.8 172.8 L469.6 171.4 L466.5 170.1 L463.4 169.0 L460.3 168.0 L457.3 167.2 L454.3 166.6 L451.5 166.2 L448.6 165.9 L445.9 165.7 L443.2 165.7 L440.6 165.9 L438.1 166.2 L435.7 166.7 L433.4 167.3 L431.2 168.0 L429.0 168.9 L427.0 169.9 L425.1 171.0 L423.3 172.3 L421.5 173.6 L419.9 175.1 L418.4 176.6 L417.0 178.3 L415.7 180.1 L414.5 181.9 L413.4 183.8" fill="none" stroke="#32aaf8" stroke-width="3.1" stroke-linecap="round"/><path d="M379.8 254.1 L378.7 256.2 L377.8 258.2 L377.0 260.3 L376.3 262.5 L375.7 264.6 L375.3 266.8 L375.1 269.0 L374.9 271.2 L375.0 273.4 L375.2 275.6 L375.6 277.9 L376.1 280.1 L376.8 282.3 L377.7 284.5 L378.7 286.7 L379.9 288.8 L381.3 291.0 L382.9 293.1 L384.7 295.1 L386.7 297.1 L388.8 299.1 L391.1 301.0 L393.6 302.8 L396.2 304.6 L396.2 304.6 L399.1 306.3 L402.0 307.9 L405.2 309.5 L408.5 310.9 L412.0 312.2 L415.6 313.5 L419.3 314.6 L423.1 315.6 L427.1 316.5 L431.2 317.3 L435.4 318.0 L439.6 318.5 L443.9 318.9 L448.3 319.2 L452.7 319.3 L457.2 319.4 L461.7 319.2 L466.2 319.0 L470.7 318.6 L475.1 318.1 L479.6 317.5 L484.0 316.8 L488.3 315.9 L492.6 314.9 L496.8 313.8 L500.9 312.6 L505.0 311.3 L508.9 309.9 L512.7 308.4 L516.3 306.8 L519.9 305.2 L523.3 303.4 L526.5 301.6 L529.6 299.7 L532.6 297.8 L535.4 295.8 L538.0 293.7 L540.5 291.6 L542.8 289.5 L544.9 287.4 L546.9 285.2 L548.7 283.0 L550.3 280.8 L551.8 278.6 L553.1 276.4 L554.2 274.1 L555.2 271.9 L556.0 269.7 L556.7 267.5 L557.2 265.3 L557.5 263.2 L557.7 261.0 L557.8 258.9 L557.7 256.8 L557.5 254.8" fill="none" stroke="#a8e812" stroke-width="3.3" stroke-linecap="round"/><path d="M471.0 276.3 L459.1 285.6 L472.6 292.6 L484.3 282.8Z" fill="#a8e812"  fill-opacity=".82"/><path d="M468.7 253.4L462.2 187.3" stroke="#a8e812" stroke-width="2.4"/><path d="M468.7 253.4L528.1 279.9" stroke="#ff3a68" stroke-width="2.4"/><path d="M468.7 253.4L413.0 292.8" stroke="#32aaf8" stroke-width="2.4"/><path d="M449.0 244.4 L446.9 229.7 L433.8 237.5 L436.3 252.6Z" fill="#ff3a68" /><path d="M486.8 240.4 L500.3 245.9 L499.9 231.1 L486.0 225.8Z" fill="#32aaf8" /><path d="M518.9 285.9 L519.0 275.8 L526.4 269.0 L537.5 273.8 L537.0 283.9 L529.9 291.0Z" fill="#ff3a68" /><path d="M401.5 288.7 L412.6 281.2 L421.9 286.4 L424.1 296.7 L413.5 304.6 L404.2 299.0Z" fill="#32aaf8" /><path d="M452.0 183.7 L461.4 179.3 L471.5 182.3 L472.5 194.8 L463.4 199.6 L453.5 196.2Z" fill="#a8e812" /><path d="M547.7 302.1 L548.0 299.2 L548.8 295.8 L550.0 292.2 L551.5 288.6 L553.3 285.2 L555.2 282.3 L557.1 279.9 L558.9 278.3 L560.5 277.4 L561.9 277.4 L562.9 278.1 L587.5 306.3 L550.6 307.1 L549.3 307.0 L548.4 306.1 L547.8 304.5Z" fill="#ff3a68" /><path d="M351.5 336.2 L373.9 299.8 L374.7 298.6 L376.1 298.1 L378.0 298.4 L380.4 299.5 L383.0 301.3 L385.8 303.8 L388.5 306.8 L391.1 310.1 L393.3 313.5 L395.0 316.9 L396.2 319.9 L396.7 322.6 L396.6 324.6 L395.9 325.9 L394.6 326.5Z" fill="#32aaf8" /><path d="M442.2 156.7 L442.4 155.4 L455.4 117.9 L475.1 153.3 L475.8 154.5 L475.5 155.8 L474.3 157.1 L472.2 158.3 L469.4 159.3 L466.0 160.2 L462.2 160.8 L458.1 161.1 L454.1 161.0 L450.4 160.7 L447.2 160.0 L444.7 159.1 L443.0 158.0Z" fill="#a8e812" /></svg>
<div class="a frame" style="left:261px;top:709px;width:1039px;height:221px;"></div>
<div class="a frame" style="left:266px;top:714px;width:1029px;height:177px;border-radius:5px;overflow:hidden"><div class="a" style="left:2px;top:2px;width:1020px;height:169px;overflow:hidden"><div class="t mono" style="left:1px;top:-7.3px">/home/mintkat/libsunaba/api/sunaba/DataUtils.hx:621: true</div><div class="t mono" style="left:1px;top:8.7px">/home/mintkat/libsunaba/api/sunaba/DataUtils.hx:625: basesfx://jump.ogg</div><div class="t mono" style="left:1px;top:24.7px">/home/mintkat/libsunaba/api/sunaba/DataUtils.hx:620: Material</div><div class="t mono" style="left:1px;top:40.7px">/home/mintkat/libsunaba/api/sunaba/DataUtils.hx:621: true</div><div class="t mono" style="left:1px;top:56.7px">/home/mintkat/libsunaba/api/sunaba/DataUtils.hx:625: ?</div><div class="t mono" style="left:1px;top:72.7px">/home/mintkat/libsunaba/api/sunaba/DataUtils.hx:620: AudioStream</div><div class="t mono" style="left:1px;top:88.7px">/home/mintkat/libsunaba/api/sunaba/DataUtils.hx:621: true</div><div class="t mono" style="left:1px;top:104.7px">/home/mintkat/libsunaba/api/sunaba/DataUtils.hx:625: ?</div><div class="t mono" style="left:1px;top:120.7px">/home/mintkat/libsunaba/api/sunaba/DataUtils.hx:620: AudioStreamOggVorbis</div><div class="t mono" style="left:1px;top:136.7px">/home/mintkat/libsunaba/api/sunaba/DataUtils.hx:621: true</div><div class="t mono" style="left:1px;top:152.7px">/home/mintkat/libsunaba/api/sunaba/DataUtils.hx:625: basesfx://jump.ogg</div></div></div>
<div class="a " style="left:1280px;top:862px;width:10px;height:18px;border:1px solid #c4c4c4;border-radius:4px;background:#fafafa"></div>
<div class="a inp" style="left:267px;top:896.6px;width:897px;height:27.6px;"></div>
<div class="t " style="left:271.8px;top:902.1px;transform:scaleX(0.9745);color:#a3a3a3">Enter console commands here...</div>
<div class="a btn" style="left:1169.7px;top:896.4px;width:125px;height:27px;"></div>
<div class="t " style="left:1174.6px;top:902.1px;transform:scaleX(0.9169);">Command Mode</div>
<svg style="left:1275px;top:903px" width="14" height="14" viewBox="0 0 14 14"><defs><linearGradient id="g49" x1="0" y1="0" x2="0" y2="1"><stop offset="0" stop-color="#ffffff"/><stop offset="1" stop-color="#dcdce4"/></linearGradient></defs><rect x=".6" y=".6" width="12.8" height="12.8" rx="1.8" fill="url(#g49)" stroke="#4466dc" stroke-width="1.1"/><path d="M3.6 5.6 L7 9.2 L10.4 5.6" fill="none" stroke="#1c2eaa" stroke-width="1.6"/></svg>
<div class="a " style="left:269.6px;top:928px;width:86.6px;height:30px;border:2px solid #d6d6d6;border-top:none;border-radius:0 0 6px 6px;background:linear-gradient(#f0f0f0,#fafafa);box-shadow:inset 0 0 0 2px #fdfdfd"></div>
<svg style="left:279px;top:937px" width="16" height="13" viewBox="0 0 16 13"><rect x=".5" y=".5" width="15" height="12" rx="1" fill="#c4c4c4" stroke="#8a8a8a" stroke-width=".8"/><rect x="1.8" y="1.8" width="12.4" height="9.4" fill="#2a2c32"/><path d="M2 2 H14 L2 8Z" fill="#555860" opacity=".7"/><path d="M3 3.4 L4.4 4.4 L3 5.4 M5 5.6 H6.6" stroke="#ddd" stroke-width=".6" fill="none"/></svg>
<div class="t " style="left:299.7px;top:936.4px;transform:scaleX(0.9032);">Console</div>
<svg style="left:370px;top:936px" width="14" height="16" viewBox="0 0 14 16"><circle cx="4.6" cy="1.8" r="1.6" fill="#2a2a2a"/><path d="M1.4 4.2 H7.8 V9.6 H6.8 V15.4 H5 V10.4 H4.2 V15.4 H2.4 V9.6 H1.4Z" fill="#3a3a3a"/><path d="M12.4 6.8 L4.6 14.2" stroke="#b39212" stroke-width="2.6"/><path d="M12.4 6.8 L4.6 14.2" stroke="#f2d84a" stroke-width="1.4"/><path d="M12.6 6.6 L11.4 7.8" stroke="#e84850" stroke-width="2.6"/><path d="M4.8 14 L3.8 15" stroke="#222" stroke-width="1.6"/></svg>
<div class="t " style="left:387.5px;top:936.4px;transform:scaleX(0.9212);">Character Editor</div>
<svg style="left:10px;top:969px" width="15" height="15" viewBox="0 0 15 15"><defs><linearGradient id="g50" x1="0" y1="0" x2="0" y2="1"><stop offset="0" stop-color="#ffffff"/><stop offset="1" stop-color="#e2e2e2"/></linearGradient></defs><rect x=".5" y=".5" width="14" height="14" rx="1.2" fill="url(#g50)" stroke="#8e8e8e" stroke-width="1"/><rect x="1" y="1" width="13" height="1.6" fill="#b4b4b4"/><rect x=".5" y="2.2" width="3.2" height="12.3" fill="#b9c7f1" stroke="#2f4fe0" stroke-width="1"/><path d="M12 8.5 H5.4 M8 5.6 L5 8.5 L8 11.4" stroke="#2238c0" stroke-width="1.3" fill="none"/><path d="M12.4 7.4 H8 M12.4 9.6 H8" stroke="#2238c0" stroke-width=".5" opacity=".5"/></svg>
<svg style="left:37px;top:969px" width="15" height="15" viewBox="0 0 15 15"><defs><linearGradient id="g51" x1="0" y1="0" x2="0" y2="1"><stop offset="0" stop-color="#ffffff"/><stop offset="1" stop-color="#e2e2e2"/></linearGradient></defs><rect x=".5" y=".5" width="14" height="14" rx="1.2" fill="url(#g51)" stroke="#8e8e8e" stroke-width="1"/><rect x="1" y="1" width="13" height="1.6" fill="#b4b4b4"/><rect x="11.3" y="2.2" width="3.2" height="12.3" fill="#b9c7f1" stroke="#2f4fe0" stroke-width="1"/><path d="M3 8.5 H9.6 M7 5.6 L10 8.5 L7 11.4" stroke="#2238c0" stroke-width="1.3" fill="none"/><path d="M2.6 7.4 H7 M2.6 9.6 H7" stroke="#2238c0" stroke-width=".5" opacity=".5"/></svg>
<svg style="left:64px;top:969px" width="15" height="15" viewBox="0 0 15 15"><defs><linearGradient id="g52" x1="0" y1="0" x2="0" y2="1"><stop offset="0" stop-color="#ffffff"/><stop offset="1" stop-color="#e2e2e2"/></linearGradient></defs><rect x=".5" y=".5" width="14" height="14" rx="1.2" fill="url(#g52)" stroke="#8e8e8e" stroke-width="1"/><rect x="1" y="1" width="13" height="1.6" fill="#b4b4b4"/><rect x=".5" y="11.3" width="14" height="3.2" fill="#b9c7f1" stroke="#2f4fe0" stroke-width="1"/><path d="M7.5 3.6 V9.6 M4.6 7 L7.5 10 L10.4 7" stroke="#2238c0" stroke-width="1.3" fill="none"/><path d="M6.4 3.4 V7 M8.6 3.4 V7" stroke="#2238c0" stroke-width=".5" opacity=".5"/></svg>
<svg style="left:91px;top:969px" width="15" height="15" viewBox="0 0 15 15"><defs><linearGradient id="g53" x1="0" y1="0" x2="0" y2="1"><stop offset="0" stop-color="#ffffff"/><stop offset="1" stop-color="#e2e2e2"/></linearGradient></defs><rect x=".5" y=".5" width="14" height="14" rx="1.2" fill="url(#g53)" stroke="#8e8e8e" stroke-width="1"/><rect x="1" y="1" width="13" height="1.6" fill="#b4b4b4"/><path d="M.5 2.2 H14.5 V11 H4.4 V14.5 H.5Z" fill="#b9c7f1" stroke="#2f4fe0" stroke-width="1"/><rect x="5.2" y="12" width="4" height="2" fill="#fafafa"/><rect x="10" y="12" width="4" height="2" fill="#fafafa"/></svg>
<div class="t " style="left:1586.9px;top:965.1px;transform:scaleX(0.9426);">v0.7.13</div>
<div class="a frame" style="left:1312px;top:82px;width:285.4px;height:877px;"></div>
<div class="t " style="left:1326.2px;top:93.8px;transform:scaleX(0.9093);">Scene Inspector</div>
<div class="a btn" style="left:1478.4px;top:87.2px;width:45.2px;height:29.7px;"></div>
<div class="t " style="left:1486.8px;top:93.8px;transform:scaleX(0.8955);">Load</div>
<div class="a btn" style="left:1528.6px;top:87.2px;width:29px;height:29.7px;"></div>
<svg style="left:1535px;top:94.6px" width="16" height="16" viewBox="0 0 16 16"><defs><linearGradient id="g54" x1="0" y1="0" x2="0" y2="1"><stop offset="0" stop-color="#f0585c"/><stop offset="0.5" stop-color="#d0101a"/><stop offset="1" stop-color="#e41820"/></linearGradient></defs><ellipse cx="8" cy="15.4" rx="7" ry=".8" fill="#000" opacity=".15"/><rect x="1.1" y="1" width="13.8" height="13.6" rx="2.6" fill="url(#g54)" stroke="#a8141a" stroke-width=".7"/><path d="M4.4 4.4 L11.6 11.4 M11.6 4.4 L4.4 11.4" stroke="#f3eded" stroke-width="2.3" stroke-linecap="round"/><circle cx="8" cy="7.9" r="1.6" fill="#d8d0d0"/></svg>
<div class="a btn" style="left:1562.4px;top:87.2px;width:29px;height:29.7px;"></div>
<svg style="left:1569px;top:94.6px" width="16" height="16" viewBox="0 0 16 16"><defs><linearGradient id="g55" x1="0" y1="0" x2="0" y2="1"><stop offset="0" stop-color="#62e46a"/><stop offset="0.5" stop-color="#14c424"/><stop offset="1" stop-color="#12dc24"/></linearGradient></defs><ellipse cx="8" cy="15.4" rx="7" ry=".8" fill="#000" opacity=".15"/><rect x="1.1" y="1" width="13.8" height="13.6" rx="2.6" fill="url(#g55)" stroke="#1aa424" stroke-width=".7"/><path d="M8 3.8 V11.8 M3.9 7.8 H12.1" stroke="#fbeefb" stroke-width="2.2"/></svg>
<div class="a frame" style="left:1317px;top:121px;width:275px;height:166px;border-radius:5px"></div>
<svg style="left:1323px;top:132.6px" width="13" height="13" viewBox="0 0 13 13"><defs><linearGradient id="g56" x1="0" y1="0" x2="0" y2="1"><stop offset="0" stop-color="#ffffff"/><stop offset="1" stop-color="#dcdce4"/></linearGradient></defs><rect x=".6" y=".6" width="11.8" height="11.8" rx="1.8" fill="url(#g56)" stroke="#4466dc" stroke-width="1.1"/><path d="M3.2 5.2 L6.5 8.6 L9.8 5.2" fill="none" stroke="#1c2eaa" stroke-width="1.4"/></svg>
<div class="a sel" style="left:1338px;top:126px;width:249px;height:27px;"></div>
<svg style="left:1346.3px;top:131.2px" width="15" height="15" viewBox="0 0 15 15"><defs><linearGradient id="g57" x1="0" y1="0" x2="0" y2="1"><stop offset="0" stop-color="#f4484c"/><stop offset="1" stop-color="#de0410"/></linearGradient></defs><rect x="0.5" y="6.3" width="7.1" height="7.1" rx="1.42" fill="url(#g57)" stroke="#a81218" stroke-width="0.64"/><defs><linearGradient id="g58" x1="0" y1="0" x2="0" y2="1"><stop offset="0" stop-color="#94de4c"/><stop offset="1" stop-color="#68bc2e"/></linearGradient></defs><rect x="7.4" y="7.3" width="7.2" height="7.2" rx="1.44" fill="url(#g58)" stroke="#3c8a22" stroke-width="0.65"/><defs><linearGradient id="g59" x1="0" y1="0" x2="0" y2="1"><stop offset="0" stop-color="#54cafe"/><stop offset="1" stop-color="#1e92da"/></linearGradient></defs><rect x="4.4" y="0.4" width="6.6" height="6.6" rx="1.32" fill="url(#g59)" stroke="#1868b4" stroke-width="0.59"/></svg>
<div class="t " style="left:1366.3px;top:131.2px;transform:scaleX(0.9172);color:#fff">Player</div>
<svg style="left:1363px;top:159.3px" width="14" height="14" viewBox="0 0 14 14"><defs><linearGradient id="g60" x1="0" y1="0" x2="0" y2="1"><stop offset="0" stop-color="#eef3f8"/><stop offset="0.5" stop-color="#d4deea"/><stop offset="1" stop-color="#dfe7f0"/></linearGradient></defs><rect x=".5" y=".5" width="13" height="12.6" rx="1.6" fill="url(#g60)" stroke="#b4c0d0" stroke-width=".8"/><path d="M1.4 8 Q7 3.6 12.6 5.4 V2 Q12.6 1.4 12 1.4 H2 Q1.4 1.4 1.4 2Z" fill="#f4f7fb" opacity=".9"/></svg>
<div class="t " style="left:1382.4px;top:158.3px;transform:scaleX(0.8856);">Camera</div>
<div class="a sep" style="left:1354px;top:179.5px;width:233px;height:1px;"></div>
<svg style="left:1363px;top:186.3px" width="14" height="14" viewBox="0 0 14 14"><defs><linearGradient id="g61" x1="0" y1="0" x2="0" y2="1"><stop offset="0" stop-color="#eef3f8"/><stop offset="0.5" stop-color="#d4deea"/><stop offset="1" stop-color="#dfe7f0"/></linearGradient></defs><rect x=".5" y=".5" width="13" height="12.6" rx="1.6" fill="url(#g61)" stroke="#b4c0d0" stroke-width=".8"/><path d="M1.4 8 Q7 3.6 12.6 5.4 V2 Q12.6 1.4 12 1.4 H2 Q1.4 1.4 1.4 2Z" fill="#f4f7fb" opacity=".9"/></svg>
<div class="t " style="left:1382.4px;top:185.3px;transform:scaleX(0.9225);">FootSoundPlayer</div>
<div class="a sep" style="left:1354px;top:206.5px;width:233px;height:1px;"></div>
<svg style="left:1363px;top:213.3px" width="14" height="14" viewBox="0 0 14 14"><defs><linearGradient id="g62" x1="0" y1="0" x2="0" y2="1"><stop offset="0" stop-color="#eef3f8"/><stop offset="0.5" stop-color="#d4deea"/><stop offset="1" stop-color="#dfe7f0"/></linearGradient></defs><rect x=".5" y=".5" width="13" height="12.6" rx="1.6" fill="url(#g62)" stroke="#b4c0d0" stroke-width=".8"/><path d="M1.4 8 Q7 3.6 12.6 5.4 V2 Q12.6 1.4 12 1.4 H2 Q1.4 1.4 1.4 2Z" fill="#f4f7fb" opacity=".9"/></svg>
<div class="t " style="left:1382.4px;top:212.3px;transform:scaleX(0.9125);">JumpSoundPlayer</div>
<div class="a sep" style="left:1354px;top:233.5px;width:233px;height:1px;"></div>
<div class="a frame" style="left:1317px;top:298px;width:275px;height:45px;"></div>
<svg style="left:1327px;top:309px" width="22.95" height="22.95" viewBox="0 0 15 15"><defs><linearGradient id="g63" x1="0" y1="0" x2="0" y2="1"><stop offset="0" stop-color="#f4484c"/><stop offset="1" stop-color="#de0410"/></linearGradient></defs><rect x="0.5" y="6.3" width="7.1" height="7.1" rx="1.42" fill="url(#g63)" stroke="#a81218" stroke-width="0.64"/><defs><linearGradient id="g64" x1="0" y1="0" x2="0" y2="1"><stop offset="0" stop-color="#94de4c"/><stop offset="1" stop-color="#68bc2e"/></linearGradient></defs><rect x="7.4" y="7.3" width="7.2" height="7.2" rx="1.44" fill="url(#g64)" stroke="#3c8a22" stroke-width="0.65"/><defs><linearGradient id="g65" x1="0" y1="0" x2="0" y2="1"><stop offset="0" stop-color="#54cafe"/><stop offset="1" stop-color="#1e92da"/></linearGradient></defs><rect x="4.4" y="0.4" width="6.6" height="6.6" rx="1.32" fill="url(#g65)" stroke="#1868b4" stroke-width="0.59"/></svg>
<div class="t " style="left:1361.2px;top:312.9px;transform:scaleX(0.9197);">Player</div>
<div class="a" style="left:0;top:0;width:1646px;height:954px;overflow:hidden"><div class="a frame" style="left:1317px;top:348.4px;width:265px;height:35.5px;"></div><svg style="left:1323.7px;top:362.4px" width="13" height="8" viewBox="0 0 13 8"><defs><linearGradient id="g66" x1="0" y1="0" x2="0" y2="1"><stop offset="0" stop-color="#9ad4f8"/><stop offset="0.5" stop-color="#3ea2ea"/><stop offset="1" stop-color="#1d86da"/></linearGradient></defs><path d="M.3 .4 H12.3 L6.3 6.6Z" fill="url(#g66)"/><path d="M.3 .5 H12.3" stroke="#d8ecfa" stroke-width=".6"/><ellipse cx="6.3" cy="7" rx="3" ry=".4" fill="#000" opacity=".2"/></svg><div class="t " style="left:1385.3px;top:357.5px;transform:scaleX(0.9361);">SpatialTransform</div><svg style="left:1533px;top:358.0px" width="16" height="16" viewBox="0 0 16 16"><ellipse cx="8" cy="15.8" rx="6" ry=".5" fill="#000" opacity=".2"/><path d="M2.6 .6 H5.6 V11 H15.4 V14 H2.6Z" fill="#f0c088" stroke="#c98a48" stroke-width=".6"/><path d="M.6 2.6 H13.6 V15.2 H10.6 V5.6 H.6Z" fill="#f4c890" stroke="#c98a48" stroke-width=".6"/><path d="M5.8 .2 V11 H15.8 M.4 5.4 H10.6 V15.8" fill="none" stroke="#2a48d8" stroke-width=".9"/><rect x="6.3" y="5.9" width="3.8" height="4.6" fill="#fbfbfb"/></svg><div class="a btn" style="left:1552px;top:353.4px;width:24px;height:25px;"></div><svg style="left:1557.6px;top:359.79999999999995px" width="13" height="13" viewBox="0 0 13 13"><defs><linearGradient id="g67" x1="0" y1="0" x2="0" y2="1"><stop offset="0" stop-color="#ea4a52"/><stop offset="0.5" stop-color="#b40f16"/><stop offset="1" stop-color="#e21a22"/></linearGradient></defs><ellipse cx="6.4" cy="12.7" rx="6" ry=".6" fill="#000" opacity=".22"/><path d="M2.5 .1 L6.3 3.6 L10.1 .1 L12.7 2.6 L8.9 6.1 L12.7 9.6 L10.1 12.1 L6.3 8.6 L2.5 12.1 L-.1 9.6 L3.7 6.1 L-.1 2.6Z" fill="url(#g67)"/></svg><div class="t " style="left:1411.3px;top:400.1px;transform:scaleX(0.9290);">x</div><div class="a inp" style="left:1422.4px;top:394.3px;width:130.8px;height:28.4px;"></div><div class="t " style="left:1427.4px;top:400.3px;transform:scaleX(0.9290);">0.0</div><svg style="left:1557px;top:396.8px" width="13.4" height="23.6" viewBox="0 0 13.4 23.6"><defs><linearGradient id="g68" x1="0" y1="0" x2="0" y2="1"><stop offset="0" stop-color="#86c8f2"/><stop offset="0.7" stop-color="#2290de"/><stop offset="1" stop-color="#1a66b6"/></linearGradient><linearGradient id="g69" x1="0" y1="0" x2="0" y2="1"><stop offset="0" stop-color="#8ccaf4"/><stop offset="0.5" stop-color="#3b9ee6"/><stop offset="1" stop-color="#1c86da"/></linearGradient><linearGradient id="g70" x1="0" y1="0" x2="0" y2="1"><stop offset="0" stop-color="#cfe3f2"/><stop offset="1" stop-color="#9cc4e2"/></linearGradient></defs><path d="M6.7 .6 L13.2 7 H.2Z" fill="url(#g68)"/><path d="M.2 6.8 H13.2" stroke="#1b5eac" stroke-width="1.2"/><path d="M.6 15.400000000000002 H12.8 L6.7 22.0Z" fill="url(#g69)"/><path d="M4.4 17.6 L6.7 19.6 L9 17.6" fill="none" stroke="#2a7ccc" stroke-width=".8" opacity=".6"/><ellipse cx="6.7" cy="22.5" rx="3.6" ry=".5" fill="#000" opacity=".2"/></svg><div class="t " style="left:1411.3px;top:433.1px;transform:scaleX(0.9290);">y</div><div class="a inp" style="left:1422.4px;top:427.3px;width:130.8px;height:28.4px;"></div><div class="t " style="left:1427.4px;top:433.3px;transform:scaleX(0.9290);">0.0</div><svg style="left:1557px;top:429.8px" width="13.4" height="23.6" viewBox="0 0 13.4 23.6"><defs><linearGradient id="g71" x1="0" y1="0" x2="0" y2="1"><stop offset="0" stop-color="#86c8f2"/><stop offset="0.7" stop-color="#2290de"/><stop offset="1" stop-color="#1a66b6"/></linearGradient><linearGradient id="g72" x1="0" y1="0" x2="0" y2="1"><stop offset="0" stop-color="#8ccaf4"/><stop offset="0.5" stop-color="#3b9ee6"/><stop offset="1" stop-color="#1c86da"/></linearGradient><linearGradient id="g73" x1="0" y1="0" x2="0" y2="1"><stop offset="0" stop-color="#cfe3f2"/><stop offset="1" stop-color="#9cc4e2"/></linearGradient></defs><path d="M6.7 .6 L13.2 7 H.2Z" fill="url(#g71)"/><path d="M.2 6.8 H13.2" stroke="#1b5eac" stroke-width="1.2"/><path d="M.6 15.400000000000002 H12.8 L6.7 22.0Z" fill="url(#g72)"/><path d="M4.4 17.6 L6.7 19.6 L9 17.6" fill="none" stroke="#2a7ccc" stroke-width=".8" opacity=".6"/><ellipse cx="6.7" cy="22.5" rx="3.6" ry=".5" fill="#000" opacity=".2"/></svg><div class="t " style="left:1411.3px;top:466.1px;transform:scaleX(0.9290);">z</div><div class="a inp" style="left:1422.4px;top:460.3px;width:130.8px;height:28.4px;"></div><div class="t " style="left:1427.4px;top:466.3px;transform:scaleX(0.9290);">0.0</div><svg style="left:1557px;top:462.8px" width="13.4" height="23.6" viewBox="0 0 13.4 23.6"><defs><linearGradient id="g74" x1="0" y1="0" x2="0" y2="1"><stop offset="0" stop-color="#86c8f2"/><stop offset="0.7" stop-color="#2290de"/><stop offset="1" stop-color="#1a66b6"/></linearGradient><linearGradient id="g75" x1="0" y1="0" x2="0" y2="1"><stop offset="0" stop-color="#8ccaf4"/><stop offset="0.5" stop-color="#3b9ee6"/><stop offset="1" stop-color="#1c86da"/></linearGradient><linearGradient id="g76" x1="0" y1="0" x2="0" y2="1"><stop offset="0" stop-color="#cfe3f2"/><stop offset="1" stop-color="#9cc4e2"/></linearGradient></defs><path d="M6.7 .6 L13.2 7 H.2Z" fill="url(#g74)"/><path d="M.2 6.8 H13.2" stroke="#1b5eac" stroke-width="1.2"/><path d="M.6 15.400000000000002 H12.8 L6.7 22.0Z" fill="url(#g75)"/><path d="M4.4 17.6 L6.7 19.6 L9 17.6" fill="none" stroke="#2a7ccc" stroke-width=".8" opacity=".6"/><ellipse cx="6.7" cy="22.5" rx="3.6" ry=".5" fill="#000" opacity=".2"/></svg><div class="t " style="left:1327px;top:432.8px;transform:scaleX(0.9551);">position</div><div class="t " style="left:1411.3px;top:499.1px;transform:scaleX(0.9290);">x</div><div class="a inp" style="left:1422.4px;top:493.3px;width:130.8px;height:28.4px;"></div><div class="t " style="left:1427.4px;top:499.4px;transform:scaleX(0.9290);">0.0</div><svg style="left:1557px;top:495.8px" width="13.4" height="23.6" viewBox="0 0 13.4 23.6"><defs><linearGradient id="g77" x1="0" y1="0" x2="0" y2="1"><stop offset="0" stop-color="#86c8f2"/><stop offset="0.7" stop-color="#2290de"/><stop offset="1" stop-color="#1a66b6"/></linearGradient><linearGradient id="g78" x1="0" y1="0" x2="0" y2="1"><stop offset="0" stop-color="#8ccaf4"/><stop offset="0.5" stop-color="#3b9ee6"/><stop offset="1" stop-color="#1c86da"/></linearGradient><linearGradient id="g79" x1="0" y1="0" x2="0" y2="1"><stop offset="0" stop-color="#cfe3f2"/><stop offset="1" stop-color="#9cc4e2"/></linearGradient></defs><path d="M6.7 .6 L13.2 7 H.2Z" fill="url(#g77)"/><path d="M.2 6.8 H13.2" stroke="#1b5eac" stroke-width="1.2"/><path d="M.6 15.400000000000002 H12.8 L6.7 22.0Z" fill="url(#g78)"/><path d="M4.4 17.6 L6.7 19.6 L9 17.6" fill="none" stroke="#2a7ccc" stroke-width=".8" opacity=".6"/><ellipse cx="6.7" cy="22.5" rx="3.6" ry=".5" fill="#000" opacity=".2"/></svg><div class="t " style="left:1411.3px;top:532.1px;transform:scaleX(0.9290);">y</div><div class="a inp" style="left:1422.4px;top:526.3px;width:130.8px;height:28.4px;"></div><div class="t " style="left:1427.4px;top:532.4px;transform:scaleX(0.9290);">0.0</div><svg style="left:1557px;top:528.8px" width="13.4" height="23.6" viewBox="0 0 13.4 23.6"><defs><linearGradient id="g80" x1="0" y1="0" x2="0" y2="1"><stop offset="0" stop-color="#86c8f2"/><stop offset="0.7" stop-color="#2290de"/><stop offset="1" stop-color="#1a66b6"/></linearGradient><linearGradient id="g81" x1="0" y1="0" x2="0" y2="1"><stop offset="0" stop-color="#8ccaf4"/><stop offset="0.5" stop-color="#3b9ee6"/><stop offset="1" stop-color="#1c86da"/></linearGradient><linearGradient id="g82" x1="0" y1="0" x2="0" y2="1"><stop offset="0" stop-color="#cfe3f2"/><stop offset="1" stop-color="#9cc4e2"/></linearGradient></defs><path d="M6.7 .6 L13.2 7 H.2Z" fill="url(#g80)"/><path d="M.2 6.8 H13.2" stroke="#1b5eac" stroke-width="1.2"/><path d="M.6 15.400000000000002 H12.8 L6.7 22.0Z" fill="url(#g81)"/><path d="M4.4 17.6 L6.7 19.6 L9 17.6" fill="none" stroke="#2a7ccc" stroke-width=".8" opacity=".6"/><ellipse cx="6.7" cy="22.5" rx="3.6" ry=".5" fill="#000" opacity=".2"/></svg><div class="t " style="left:1411.3px;top:565.1px;transform:scaleX(0.9290);">z</div><div class="a inp" style="left:1422.4px;top:559.3px;width:130.8px;height:28.4px;"></div><div class="t " style="left:1427.4px;top:565.4px;transform:scaleX(0.9290);">0.0</div><svg style="left:1557px;top:561.8px" width="13.4" height="23.6" viewBox="0 0 13.4 23.6"><defs><linearGradient id="g83" x1="0" y1="0" x2="0" y2="1"><stop offset="0" stop-color="#86c8f2"/><stop offset="0.7" stop-color="#2290de"/><stop offset="1" stop-color="#1a66b6"/></linearGradient><linearGradient id="g84" x1="0" y1="0" x2="0" y2="1"><stop offset="0" stop-color="#8ccaf4"/><stop offset="0.5" stop-color="#3b9ee6"/><stop offset="1" stop-color="#1c86da"/></linearGradient><linearGradient id="g85" x1="0" y1="0" x2="0" y2="1"><stop offset="0" stop-color="#cfe3f2"/><stop offset="1" stop-color="#9cc4e2"/></linearGradient></defs><path d="M6.7 .6 L13.2 7 H.2Z" fill="url(#g83)"/><path d="M.2 6.8 H13.2" stroke="#1b5eac" stroke-width="1.2"/><path d="M.6 15.400000000000002 H12.8 L6.7 22.0Z" fill="url(#g84)"/><path d="M4.4 17.6 L6.7 19.6 L9 17.6" fill="none" stroke="#2a7ccc" stroke-width=".8" opacity=".6"/><ellipse cx="6.7" cy="22.5" rx="3.6" ry=".5" fill="#000" opacity=".2"/></svg><div class="t " style="left:1327px;top:531.9px;transform:scaleX(0.9571);">rotation</div><div class="t " style="left:1411.3px;top:598.1px;transform:scaleX(0.9290);">x</div><div class="a inp" style="left:1422.4px;top:592.3px;width:130.8px;height:28.4px;"></div><div class="t " style="left:1427.4px;top:598.4px;transform:scaleX(0.9290);">1.0</div><svg style="left:1557px;top:594.8px" width="13.4" height="23.6" viewBox="0 0 13.4 23.6"><defs><linearGradient id="g86" x1="0" y1="0" x2="0" y2="1"><stop offset="0" stop-color="#86c8f2"/><stop offset="0.7" stop-color="#2290de"/><stop offset="1" stop-color="#1a66b6"/></linearGradient><linearGradient id="g87" x1="0" y1="0" x2="0" y2="1"><stop offset="0" stop-color="#8ccaf4"/><stop offset="0.5" stop-color="#3b9ee6"/><stop offset="1" stop-color="#1c86da"/></linearGradient><linearGradient id="g88" x1="0" y1="0" x2="0" y2="1"><stop offset="0" stop-color="#cfe3f2"/><stop offset="1" stop-color="#9cc4e2"/></linearGradient></defs><path d="M6.7 .6 L13.2 7 H.2Z" fill="url(#g86)"/><path d="M.2 6.8 H13.2" stroke="#1b5eac" stroke-width="1.2"/><path d="M.6 15.400000000000002 H12.8 L6.7 22.0Z" fill="url(#g87)"/><path d="M4.4 17.6 L6.7 19.6 L9 17.6" fill="none" stroke="#2a7ccc" stroke-width=".8" opacity=".6"/><ellipse cx="6.7" cy="22.5" rx="3.6" ry=".5" fill="#000" opacity=".2"/></svg><div class="t " style="left:1411.3px;top:631.1px;transform:scaleX(0.9290);">y</div><div class="a inp" style="left:1422.4px;top:625.3px;width:130.8px;height:28.4px;"></div><div class="t " style="left:1427.4px;top:631.4px;transform:scaleX(0.9290);">1.0</div><svg style="left:1557px;top:627.8px" width="13.4" height="23.6" viewBox="0 0 13.4 23.6"><defs><linearGradient id="g89" x1="0" y1="0" x2="0" y2="1"><stop offset="0" stop-color="#86c8f2"/><stop offset="0.7" stop-color="#2290de"/><stop offset="1" stop-color="#1a66b6"/></linearGradient><linearGradient id="g90" x1="0" y1="0" x2="0" y2="1"><stop offset="0" stop-color="#8ccaf4"/><stop offset="0.5" stop-color="#3b9ee6"/><stop offset="1" stop-color="#1c86da"/></linearGradient><linearGradient id="g91" x1="0" y1="0" x2="0" y2="1"><stop offset="0" stop-color="#cfe3f2"/><stop offset="1" stop-color="#9cc4e2"/></linearGradient></defs><path d="M6.7 .6 L13.2 7 H.2Z" fill="url(#g89)"/><path d="M.2 6.8 H13.2" stroke="#1b5eac" stroke-width="1.2"/><path d="M.6 15.400000000000002 H12.8 L6.7 22.0Z" fill="url(#g90)"/><path d="M4.4 17.6 L6.7 19.6 L9 17.6" fill="none" stroke="#2a7ccc" stroke-width=".8" opacity=".6"/><ellipse cx="6.7" cy="22.5" rx="3.6" ry=".5" fill="#000" opacity=".2"/></svg><div class="t " style="left:1411.3px;top:664.1px;transform:scaleX(0.9290);">z</div><div class="a inp" style="left:1422.4px;top:658.3px;width:130.8px;height:28.4px;"></div><div class="t " style="left:1427.4px;top:664.4px;transform:scaleX(0.9290);">1.0</div><svg style="left:1557px;top:660.8px" width="13.4" height="23.6" viewBox="0 0 13.4 23.6"><defs><linearGradient id="g92" x1="0" y1="0" x2="0" y2="1"><stop offset="0" stop-color="#86c8f2"/><stop offset="0.7" stop-color="#2290de"/><stop offset="1" stop-color="#1a66b6"/></linearGradient><linearGradient id="g93" x1="0" y1="0" x2="0" y2="1"><stop offset="0" stop-color="#8ccaf4"/><stop offset="0.5" stop-color="#3b9ee6"/><stop offset="1" stop-color="#1c86da"/></linearGradient><linearGradient id="g94" x1="0" y1="0" x2="0" y2="1"><stop offset="0" stop-color="#cfe3f2"/><stop offset="1" stop-color="#9cc4e2"/></linearGradient></defs><path d="M6.7 .6 L13.2 7 H.2Z" fill="url(#g92)"/><path d="M.2 6.8 H13.2" stroke="#1b5eac" stroke-width="1.2"/><path d="M.6 15.400000000000002 H12.8 L6.7 22.0Z" fill="url(#g93)"/><path d="M4.4 17.6 L6.7 19.6 L9 17.6" fill="none" stroke="#2a7ccc" stroke-width=".8" opacity=".6"/><ellipse cx="6.7" cy="22.5" rx="3.6" ry=".5" fill="#000" opacity=".2"/></svg><div class="t " style="left:1327px;top:630.9px;transform:scaleX(0.9025);">scale</div><div class="a frame" style="left:1317px;top:701.4px;width:265px;height:35.5px;"></div><svg style="left:1323.7px;top:715.4px" width="13" height="8" viewBox="0 0 13 8"><defs><linearGradient id="g95" x1="0" y1="0" x2="0" y2="1"><stop offset="0" stop-color="#9ad4f8"/><stop offset="0.5" stop-color="#3ea2ea"/><stop offset="1" stop-color="#1d86da"/></linearGradient></defs><path d="M.3 .4 H12.3 L6.3 6.6Z" fill="url(#g95)"/><path d="M.3 .5 H12.3" stroke="#d8ecfa" stroke-width=".6"/><ellipse cx="6.3" cy="7" rx="3" ry=".4" fill="#000" opacity=".2"/></svg><div class="t " style="left:1397.1px;top:710.5px;transform:scaleX(0.9433);">MeshDisplay</div><svg style="left:1533px;top:711.0px" width="16" height="16" viewBox="0 0 16 16"><defs><linearGradient id="g96" x1="0" y1="0" x2="0" y2="1"><stop offset="0" stop-color="#b4a6a6"/><stop offset="1" stop-color="#9c8e8e"/></linearGradient></defs><path d="M1.6 .8 Q7.8 2.6 14 .8 Q15.4 .6 15 2 Q13.4 7.8 15 13.6 Q15.4 15 14 14.8 Q7.8 13 1.6 14.8 Q.2 15 .6 13.6 Q2.2 7.8 .6 2 Q.2 .6 1.6 .8Z" fill="url(#g96)" stroke="#5c4a4a" stroke-width=".9"/><path d="M7.8 6.6 L11.4 12 H4.2Z" fill="#8c7e7e" opacity=".7"/></svg><div class="a btn" style="left:1552px;top:706.4px;width:24px;height:25px;"></div><svg style="left:1557.6px;top:712.8px" width="13" height="13" viewBox="0 0 13 13"><defs><linearGradient id="g97" x1="0" y1="0" x2="0" y2="1"><stop offset="0" stop-color="#ea4a52"/><stop offset="0.5" stop-color="#b40f16"/><stop offset="1" stop-color="#e21a22"/></linearGradient></defs><ellipse cx="6.4" cy="12.7" rx="6" ry=".6" fill="#000" opacity=".22"/><path d="M2.5 .1 L6.3 3.6 L10.1 .1 L12.7 2.6 L8.9 6.1 L12.7 9.6 L10.1 12.1 L6.3 8.6 L2.5 12.1 L-.1 9.6 L3.7 6.1 L-.1 2.6Z" fill="url(#g97)"/></svg><div class="t " style="left:1327px;top:751.9px;transform:scaleX(0.9358);">layerMask</div><div class="a inp" style="left:1422.4px;top:747.0999999999999px;width:130.8px;height:28.4px;"></div><div class="t " style="left:1427.4px;top:753.1px;transform:scaleX(0.9290);">0</div><svg style="left:1557px;top:749.5999999999999px" width="13.4" height="23.6" viewBox="0 0 13.4 23.6"><defs><linearGradient id="g98" x1="0" y1="0" x2="0" y2="1"><stop offset="0" stop-color="#86c8f2"/><stop offset="0.7" stop-color="#2290de"/><stop offset="1" stop-color="#1a66b6"/></linearGradient><linearGradient id="g99" x1="0" y1="0" x2="0" y2="1"><stop offset="0" stop-color="#8ccaf4"/><stop offset="0.5" stop-color="#3b9ee6"/><stop offset="1" stop-color="#1c86da"/></linearGradient><linearGradient id="g100" x1="0" y1="0" x2="0" y2="1"><stop offset="0" stop-color="#cfe3f2"/><stop offset="1" stop-color="#9cc4e2"/></linearGradient></defs><path d="M6.7 .6 L13.2 7 H.2Z" fill="url(#g98)"/><path d="M.2 6.8 H13.2" stroke="#1b5eac" stroke-width="1.2"/><path d="M.6 15.400000000000002 H12.8 L6.7 22.0Z" fill="url(#g99)"/><path d="M4.4 17.6 L6.7 19.6 L9 17.6" fill="none" stroke="#2a7ccc" stroke-width=".8" opacity=".6"/><ellipse cx="6.7" cy="22.5" rx="3.6" ry=".5" fill="#000" opacity=".2"/></svg><div class="t " style="left:1327px;top:784.9px;transform:scaleX(0.9719);">sortingOffset</div><div class="a inp" style="left:1422.4px;top:780.0999999999999px;width:130.8px;height:28.4px;"></div><div class="t " style="left:1427.4px;top:786.1px;transform:scaleX(0.9290);">0.0</div><svg style="left:1557px;top:782.5999999999999px" width="13.4" height="23.6" viewBox="0 0 13.4 23.6"><defs><linearGradient id="g101" x1="0" y1="0" x2="0" y2="1"><stop offset="0" stop-color="#86c8f2"/><stop offset="0.7" stop-color="#2290de"/><stop offset="1" stop-color="#1a66b6"/></linearGradient><linearGradient id="g102" x1="0" y1="0" x2="0" y2="1"><stop offset="0" stop-color="#8ccaf4"/><stop offset="0.5" stop-color="#3b9ee6"/><stop offset="1" stop-color="#1c86da"/></linearGradient><linearGradient id="g103" x1="0" y1="0" x2="0" y2="1"><stop offset="0" stop-color="#cfe3f2"/><stop offset="1" stop-color="#9cc4e2"/></linearGradient></defs><path d="M6.7 .6 L13.2 7 H.2Z" fill="url(#g101)"/><path d="M.2 6.8 H13.2" stroke="#1b5eac" stroke-width="1.2"/><path d="M.6 15.400000000000002 H12.8 L6.7 22.0Z" fill="url(#g102)"/><path d="M4.4 17.6 L6.7 19.6 L9 17.6" fill="none" stroke="#2a7ccc" stroke-width=".8" opacity=".6"/><ellipse cx="6.7" cy="22.5" rx="3.6" ry=".5" fill="#000" opacity=".2"/></svg><div class="t " style="left:1327px;top:816.8px;transform:scaleX(0.9454);">sortingUseAabbCenter</div><svg style="left:1535.4px;top:819.4px" width="31" height="14" viewBox="0 0 31 14"><rect x=".3" y=".3" width="30.4" height="12.8" rx="6.4" fill="#fbfbfb" stroke="#f4f4f4" stroke-width=".6"/><circle cx="24" cy="6.7" r="5.4" fill="#161616"/></svg><div class="t " style="left:1327px;top:847.9px;transform:scaleX(0.9334);">castShadow</div><div class="a inp" style="left:1422.4px;top:843.0999999999999px;width:130.8px;height:28.4px;"></div><div class="t " style="left:1427.4px;top:849.1px;transform:scaleX(0.9290);">1</div><svg style="left:1557px;top:845.5999999999999px" width="13.4" height="23.6" viewBox="0 0 13.4 23.6"><defs><linearGradient id="g104" x1="0" y1="0" x2="0" y2="1"><stop offset="0" stop-color="#86c8f2"/><stop offset="0.7" stop-color="#2290de"/><stop offset="1" stop-color="#1a66b6"/></linearGradient><linearGradient id="g105" x1="0" y1="0" x2="0" y2="1"><stop offset="0" stop-color="#8ccaf4"/><stop offset="0.5" stop-color="#3b9ee6"/><stop offset="1" stop-color="#1c86da"/></linearGradient><linearGradient id="g106" x1="0" y1="0" x2="0" y2="1"><stop offset="0" stop-color="#cfe3f2"/><stop offset="1" stop-color="#9cc4e2"/></linearGradient></defs><path d="M6.7 .6 L13.2 7 H.2Z" fill="url(#g104)"/><path d="M.2 6.8 H13.2" stroke="#1b5eac" stroke-width="1.2"/><path d="M.6 15.400000000000002 H12.8 L6.7 22.0Z" fill="url(#g105)"/><path d="M4.4 17.6 L6.7 19.6 L9 17.6" fill="none" stroke="#2a7ccc" stroke-width=".8" opacity=".6"/><ellipse cx="6.7" cy="22.5" rx="3.6" ry=".5" fill="#000" opacity=".2"/></svg><div class="t " style="left:1327px;top:876.8px;transform:scaleX(0.9444);">customAabb</div><div class="a" style="left:1327px;top:900px;width:91px;height:30px;overflow:hidden"><div class="t " style="left:0px;top:5.5px;transform:scaleX(0.9648);">extraCullMargin</div></div><div class="a inp" style="left:1422.4px;top:900.3px;width:130.8px;height:28.4px;"></div><div class="t " style="left:1427.4px;top:906.4px;transform:scaleX(0.9290);">0.0</div><svg style="left:1557px;top:902.8px" width="13.4" height="23.6" viewBox="0 0 13.4 23.6"><defs><linearGradient id="g107" x1="0" y1="0" x2="0" y2="1"><stop offset="0" stop-color="#86c8f2"/><stop offset="0.7" stop-color="#2290de"/><stop offset="1" stop-color="#1a66b6"/></linearGradient><linearGradient id="g108" x1="0" y1="0" x2="0" y2="1"><stop offset="0" stop-color="#8ccaf4"/><stop offset="0.5" stop-color="#3b9ee6"/><stop offset="1" stop-color="#1c86da"/></linearGradient><linearGradient id="g109" x1="0" y1="0" x2="0" y2="1"><stop offset="0" stop-color="#cfe3f2"/><stop offset="1" stop-color="#9cc4e2"/></linearGradient></defs><path d="M6.7 .6 L13.2 7 H.2Z" fill="url(#g107)"/><path d="M.2 6.8 H13.2" stroke="#1b5eac" stroke-width="1.2"/><path d="M.6 15.400000000000002 H12.8 L6.7 22.0Z" fill="url(#g108)"/><path d="M4.4 17.6 L6.7 19.6 L9 17.6" fill="none" stroke="#2a7ccc" stroke-width=".8" opacity=".6"/><ellipse cx="6.7" cy="22.5" rx="3.6" ry=".5" fill="#000" opacity=".2"/></svg><div class="t " style="left:1327px;top:938.1px;transform:scaleX(0.9407);">giMode</div><div class="a inp" style="left:1422.4px;top:933.3px;width:130.8px;height:28.4px;"></div><div class="t " style="left:1427.4px;top:939.4px;transform:scaleX(0.9290);">1</div><svg style="left:1557px;top:935.8px" width="13.4" height="23.6" viewBox="0 0 13.4 23.6"><defs><linearGradient id="g110" x1="0" y1="0" x2="0" y2="1"><stop offset="0" stop-color="#86c8f2"/><stop offset="0.7" stop-color="#2290de"/><stop offset="1" stop-color="#1a66b6"/></linearGradient><linearGradient id="g111" x1="0" y1="0" x2="0" y2="1"><stop offset="0" stop-color="#8ccaf4"/><stop offset="0.5" stop-color="#3b9ee6"/><stop offset="1" stop-color="#1c86da"/></linearGradient><linearGradient id="g112" x1="0" y1="0" x2="0" y2="1"><stop offset="0" stop-color="#cfe3f2"/><stop offset="1" stop-color="#9cc4e2"/></linearGradient></defs><path d="M6.7 .6 L13.2 7 H.2Z" fill="url(#g110)"/><path d="M.2 6.8 H13.2" stroke="#1b5eac" stroke-width="1.2"/><path d="M.6 15.400000000000002 H12.8 L6.7 22.0Z" fill="url(#g111)"/><path d="M4.4 17.6 L6.7 19.6 L9 17.6" fill="none" stroke="#2a7ccc" stroke-width=".8" opacity=".6"/><ellipse cx="6.7" cy="22.5" rx="3.6" ry=".5" fill="#000" opacity=".2"/></svg></div>
<div class="a " style="left:1583.7px;top:353.6px;width:7.4px;height:122.6px;border:1px solid #d6d6d6;border-radius:3.5px;background:#fcfcfc;box-shadow:inset 0 0 0 1.5px #fff, inset 0 0 0 2.5px #e8e8e8"></div>
</div></body></html>
